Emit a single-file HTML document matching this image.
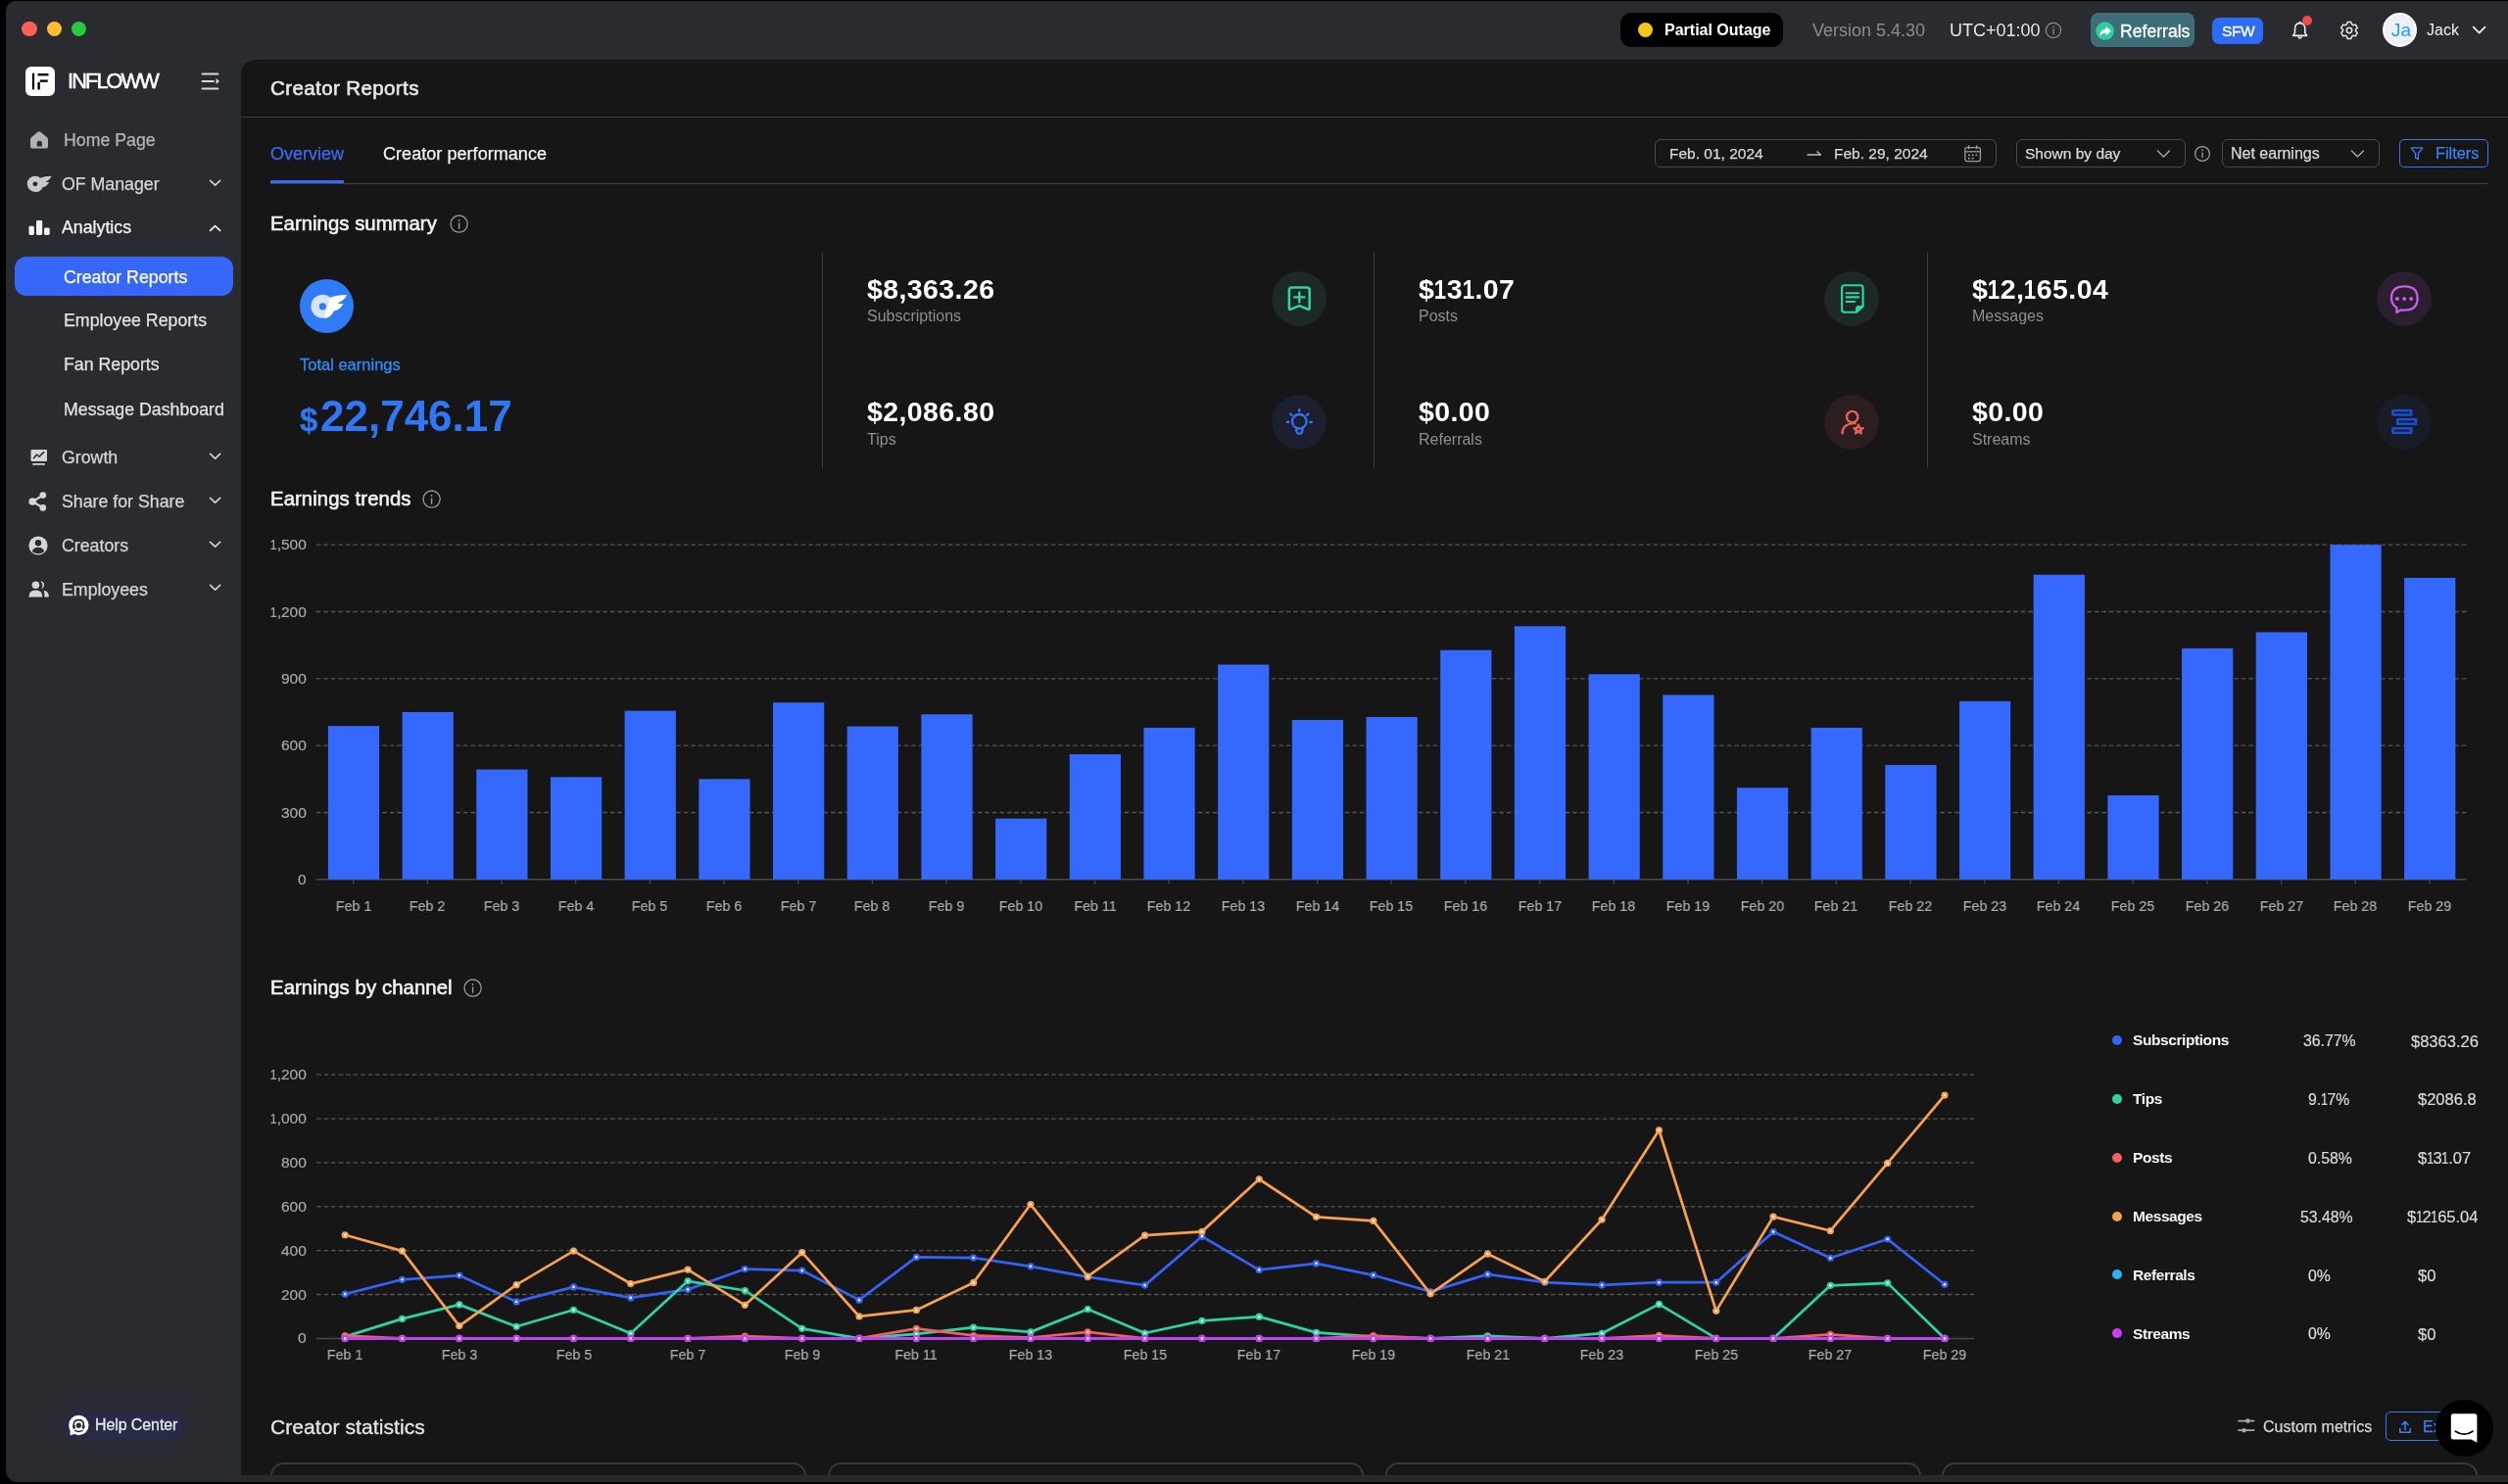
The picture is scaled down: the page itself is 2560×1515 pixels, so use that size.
<!DOCTYPE html>
<html><head><meta charset="utf-8"><title>Creator Reports</title>
<style>
html,body{margin:0;padding:0;background:#000;width:2560px;height:1515px;overflow:hidden}
body{position:relative;font-family:"Liberation Sans", sans-serif}
.t{position:absolute;line-height:1;white-space:nowrap;font-family:"Liberation Sans", sans-serif;will-change:transform}
svg{overflow:visible}
</style></head><body>
<div style="position:absolute;left:6.0px;top:1.0px;width:2554.0px;height:1512.0px;background:#2a2b30;border-radius:10px 0 0 12px"></div>
<div style="position:absolute;left:246.0px;top:60.5px;width:2314.0px;height:1445.3px;background:#161617;border-top-left-radius:15px"></div>
<div style="position:absolute;left:22.4px;top:21.8px;width:15.4px;height:15.4px;background:#fe5f57;border-radius:50%"></div>
<div style="position:absolute;left:47.5px;top:21.8px;width:15.4px;height:15.4px;background:#febc2e;border-radius:50%"></div>
<div style="position:absolute;left:72.6px;top:21.8px;width:15.4px;height:15.4px;background:#28c840;border-radius:50%"></div>
<div style="position:absolute;left:1654.0px;top:13.0px;width:166.0px;height:35.0px;background:#000;border-radius:11.5px"></div>
<div style="position:absolute;left:1672.1px;top:22.9px;width:15.4px;height:15.4px;background:#f5c518;border-radius:50%"></div>
<div class="t" style="left:1699.0px;top:22.80px;font-size:16px;color:#fff;font-weight:700;">Partial Outage</div>
<div class="t" style="left:1849.5px;top:21.70px;font-size:18px;color:#8b8b90;">Version 5.4.30</div>
<div class="t" style="left:1990.0px;top:21.70px;font-size:18px;color:#e6e6e6;">UTC+01:00</div>
<svg style="position:absolute;left:2087.0px;top:22.0px;" width="18" height="18" viewBox="0 0 18 18"><circle cx="9" cy="9" r="7.6" fill="none" stroke="#8e8e93" stroke-width="1.2"/><rect x="8.4" y="7.6" width="1.3" height="5.5" fill="#8e8e93"/><circle cx="9" cy="5.4" r="0.8" fill="#8e8e93"/></svg>
<div style="position:absolute;left:2134.0px;top:13.0px;width:106.0px;height:35.0px;background:#3d6e77;border-radius:8px"></div>
<svg style="position:absolute;left:2139.0px;top:22.0px;" width="20" height="20" viewBox="0 0 20 20"><circle cx="9.6" cy="9.6" r="9.3" fill="#2ecf9c"/><path d="M4.6 14.4 C5 10 7.6 8 11 8 V5.4 L15.6 9.6 L11 13.8 V11.2 C8.4 11.2 6.2 12.2 4.6 14.4 Z" fill="#fff" stroke="#fff" stroke-width="0.6" stroke-linejoin="round"/></svg>
<div class="t" style="left:2164.0px;top:23.64px;font-size:17.6px;color:#fff;-webkit-text-stroke:0.3px #fff;">Referrals</div>
<div style="position:absolute;left:2258.0px;top:17.5px;width:52.0px;height:27.5px;background:#2f6cf6;border-radius:7px"></div>
<div class="t" style="left:2268.0px;top:23.83px;font-size:15.5px;color:#fff;letter-spacing:-0.4px;-webkit-text-stroke:0.35px #fff;">SFW</div>
<svg style="position:absolute;left:2337.0px;top:19.0px;" width="22" height="24" viewBox="0 0 22 24"><path d="M10.65 4.6 C7.3 4.6 5.5 7.2 5.5 10.4 V14.6 L3.6 17.4 H17.7 L15.8 14.6 V10.4 C15.8 7.2 14 4.6 10.65 4.6 Z" fill="none" stroke="#ececec" stroke-width="1.6" stroke-linejoin="round"/><path d="M10.65 3.2 V4.6" stroke="#ececec" stroke-width="1.6" stroke-linecap="round"/><path d="M9 18.2 C9.2 19.5 9.8 20.1 10.65 20.1 C11.5 20.1 12.1 19.5 12.3 18.2" fill="none" stroke="#ececec" stroke-width="1.5"/></svg>
<div style="position:absolute;left:2350.0px;top:15.7px;width:10.2px;height:10.2px;background:#f04a4a;border-radius:50%"></div>
<svg style="position:absolute;left:2387.5px;top:20.7px;" width="20" height="20" viewBox="0 0 20 20"><path d="M7.32 3.97 L8.07 1.62 L11.93 1.62 L12.68 3.97 L13.88 4.66 L16.29 4.13 L18.22 7.49 L16.56 9.31 L16.56 10.69 L18.22 12.51 L16.29 15.87 L13.88 15.34 L12.68 16.03 L11.93 18.38 L8.07 18.38 L7.32 16.03 L6.12 15.34 L3.71 15.87 L1.78 12.51 L3.44 10.69 L3.44 9.31 L1.78 7.49 L3.71 4.13 L6.12 4.66 Z" fill="none" stroke="#e6e6e6" stroke-width="1.5" stroke-linejoin="round"/><circle cx="10" cy="10" r="2.7" fill="none" stroke="#e6e6e6" stroke-width="1.5"/></svg>
<div style="position:absolute;left:2432.0px;top:13.2px;width:35.0px;height:35.0px;background:#eef0f4;border-radius:50%;box-sizing:border-box;border:2px solid #fff"></div>
<div class="t" style="left:2440.5px;top:21.25px;font-size:19px;color:#1aa3f2;">Ja</div>
<div class="t" style="left:2477.0px;top:22.80px;font-size:16px;color:#f0f0f0;">Jack</div>
<svg style="position:absolute;left:2522.0px;top:25.0px;" width="17" height="12" viewBox="0 0 17 12"><path d="M2.7 2.6 L8.6 8.6 L14.5 2.6" fill="none" stroke="#e8e8e8" stroke-width="1.8" stroke-linecap="round" stroke-linejoin="round"/></svg>
<div style="position:absolute;left:26.3px;top:68.0px;width:30.0px;height:30.0px;background:#fff;border-radius:6px"></div>
<svg style="position:absolute;left:26.3px;top:68.0px;" width="30" height="30" viewBox="0 0 30 30"><g fill="#000"><rect x="6.9" y="6.7" width="2.2" height="16.7"/><rect x="12.6" y="7" width="10.9" height="2.4"/><rect x="14.8" y="13.5" width="7.9" height="2.3"/><path d="M12.4 23.4 V16.6 L13.2 15.8 H14.8 V23.4 Z"/></g></svg>
<div class="t" style="left:69.2px;top:72.16px;font-size:21.7px;color:#fff;letter-spacing:-1.85px;-webkit-text-stroke:0.55px #fff;">INFLOWW</div>
<svg style="position:absolute;left:204.0px;top:72.0px;" width="22" height="22" viewBox="0 0 22 22"><g stroke="#d8d8dc" stroke-width="1.8" stroke-linecap="round"><line x1="2.5" y1="3.5" x2="18.5" y2="3.5"/><line x1="2.5" y1="11" x2="14" y2="11"/><line x1="2.5" y1="18.5" x2="18.5" y2="18.5"/></g><path d="M16.5 8 L20 11 L16.5 14 Z" fill="#d8d8dc"/></svg>
<svg style="position:absolute;left:29.0px;top:132.0px;" width="22" height="22" viewBox="0 0 22 22"><path d="M2 10.2 Q2 9 3 8.2 L9.6 2.8 Q11 1.7 12.4 2.8 L19 8.2 Q20 9 20 10.2 V17.8 Q20 19.6 18.2 19.6 H3.8 Q2 19.6 2 17.8 Z" fill="#b2b2b6"/><path d="M8.7 17.5 V13.6 Q8.7 11.7 11.3 11.7 Q13.9 11.7 13.9 13.6 V17.5 Z" fill="#2a2b30"/></svg>
<div class="t" style="left:65.0px;top:134.81px;font-size:17.75px;color:#b4b4b8;-webkit-text-stroke:0.25px currentColor;">Home Page</div>
<svg style="position:absolute;left:19.67px;top:169.3px;overflow:visible" width="38" height="38" viewBox="0 0 56 56"><circle cx="23.4" cy="27.8" r="12" fill="#c8c8cd"/><circle cx="23.4" cy="27.8" r="3.6" fill="#2a2b30"/><path d="M31.2 18.8 Q38 15.8 48.2 16 Q45.6 21.8 38.4 24.4 Q41.6 25.2 44.6 25 Q40.8 31.8 34.8 32.6 Q31.6 39.8 24.8 40.2 Z" fill="#c8c8cd"/></svg>
<div class="t" style="left:62.7px;top:179.51px;font-size:17.75px;color:#d6d6da;-webkit-text-stroke:0.25px currentColor;">OF Manager</div>
<svg style="position:absolute;left:212.0px;top:181.6px;" width="16" height="10" viewBox="0 0 16 10"><path d="M2.6 2.4 L7.6 7.2 L12.6 2.4" fill="none" stroke="#d0d0d4" stroke-width="1.7" stroke-linecap="round" stroke-linejoin="round"/></svg>
<svg style="position:absolute;left:28.0px;top:224.0px;" width="24" height="18" viewBox="0 0 24 18"><rect x="1.5" y="6.8" width="5.4" height="9.2" rx="1.4" fill="#f2f2f4"/><rect x="9" y="1.1" width="6.2" height="14.9" rx="1.4" fill="#f2f2f4"/><rect x="17" y="8.6" width="5.7" height="7.4" rx="1.4" fill="#f2f2f4"/></svg>
<div class="t" style="left:62.7px;top:224.41px;font-size:17.75px;color:#f4f4f6;-webkit-text-stroke:0.25px currentColor;">Analytics</div>
<svg style="position:absolute;left:212.0px;top:228.0px;" width="16" height="10" viewBox="0 0 16 10"><path d="M2.6 7.4 L7.6 2.6 L12.6 7.4" fill="none" stroke="#f0f0f2" stroke-width="1.7" stroke-linecap="round" stroke-linejoin="round"/></svg>
<div style="position:absolute;left:15.2px;top:262.3px;width:222.8px;height:39.7px;background:#3767f8;border-radius:12px"></div>
<div class="t" style="left:65.0px;top:274.51px;font-size:17.75px;color:#fff;-webkit-text-stroke:0.25px currentColor;">Creator Reports</div>
<div class="t" style="left:65.0px;top:319.11px;font-size:17.75px;color:#e2e2e6;-webkit-text-stroke:0.25px currentColor;">Employee Reports</div>
<div class="t" style="left:65.0px;top:364.21px;font-size:17.75px;color:#e2e2e6;-webkit-text-stroke:0.25px currentColor;">Fan Reports</div>
<div class="t" style="left:65.0px;top:409.51px;font-size:17.75px;color:#e2e2e6;-webkit-text-stroke:0.25px currentColor;">Message Dashboard</div>
<svg style="position:absolute;left:29.0px;top:456.0px;" width="22" height="22" viewBox="0 0 22 22"><rect x="2.5" y="3" width="16.5" height="12" rx="1" fill="#d6d6da"/><path d="M5.6 11.6 L8.6 8 L11 10.2 L15.6 5.6" fill="none" stroke="#2a2b30" stroke-width="1.5" stroke-linecap="round" stroke-linejoin="round"/><rect x="4" y="17" width="13" height="1.8" rx="0.9" fill="#d6d6da"/></svg>
<div class="t" style="left:62.7px;top:459.41px;font-size:17.75px;color:#d6d6da;-webkit-text-stroke:0.25px currentColor;">Growth</div>
<svg style="position:absolute;left:28.0px;top:501.0px;" width="22" height="22" viewBox="0 0 22 22"><circle cx="5.2" cy="11" r="3.8" fill="#d6d6da"/><circle cx="15.8" cy="4.6" r="3.3" fill="#d6d6da"/><circle cx="15.8" cy="17.4" r="3.3" fill="#d6d6da"/><path d="M5.2 11 L15.8 4.6 M5.2 11 L15.8 17.4" stroke="#d6d6da" stroke-width="2.2"/></svg>
<div class="t" style="left:62.7px;top:504.11px;font-size:17.75px;color:#d6d6da;-webkit-text-stroke:0.25px currentColor;">Share for Share</div>
<svg style="position:absolute;left:28.0px;top:546.0px;" width="22" height="22" viewBox="0 0 22 22"><circle cx="11" cy="11" r="9.6" fill="#d6d6da"/><circle cx="11" cy="8.2" r="3.2" fill="#2a2b30"/><path d="M4.8 17 Q6.2 12.8 11 12.8 Q15.8 12.8 17.2 17 Q14.8 19.2 11 19.2 Q7.2 19.2 4.8 17 Z" fill="#2a2b30"/></svg>
<div class="t" style="left:62.7px;top:548.81px;font-size:17.75px;color:#d6d6da;-webkit-text-stroke:0.25px currentColor;">Creators</div>
<svg style="position:absolute;left:28.0px;top:591.0px;" width="24" height="22" viewBox="0 0 24 22"><circle cx="8.4" cy="6.2" r="3.8" fill="#d6d6da"/><path d="M1.4 18.6 Q1.4 11.6 8.4 11.6 Q15.4 11.6 15.4 18.6 Z" fill="#d6d6da"/><path d="M13.2 2.6 Q17.2 2.8 17 6.6 Q16.8 9.6 14.2 10 Q15.6 8.2 15.4 6.4 Q15.2 4 13.2 2.6 Z" fill="#d6d6da"/><path d="M16.8 11.8 Q21.8 12.4 21.8 18.6 H17.4 Q17.6 14.6 16.8 11.8 Z" fill="#d6d6da"/></svg>
<div class="t" style="left:62.7px;top:593.51px;font-size:17.75px;color:#d6d6da;-webkit-text-stroke:0.25px currentColor;">Employees</div>
<svg style="position:absolute;left:212.0px;top:461.0px;" width="16" height="10" viewBox="0 0 16 10"><path d="M2.6 2.4 L7.6 7.2 L12.6 2.4" fill="none" stroke="#d0d0d4" stroke-width="1.7" stroke-linecap="round" stroke-linejoin="round"/></svg>
<svg style="position:absolute;left:212.0px;top:505.7px;" width="16" height="10" viewBox="0 0 16 10"><path d="M2.6 2.4 L7.6 7.2 L12.6 2.4" fill="none" stroke="#d0d0d4" stroke-width="1.7" stroke-linecap="round" stroke-linejoin="round"/></svg>
<svg style="position:absolute;left:212.0px;top:550.5px;" width="16" height="10" viewBox="0 0 16 10"><path d="M2.6 2.4 L7.6 7.2 L12.6 2.4" fill="none" stroke="#d0d0d4" stroke-width="1.7" stroke-linecap="round" stroke-linejoin="round"/></svg>
<svg style="position:absolute;left:212.0px;top:595.2px;" width="16" height="10" viewBox="0 0 16 10"><path d="M2.6 2.4 L7.6 7.2 L12.6 2.4" fill="none" stroke="#d0d0d4" stroke-width="1.7" stroke-linecap="round" stroke-linejoin="round"/></svg>
<div style="position:absolute;left:63.2px;top:1440.0px;width:127.0px;height:29.6px;background:#262b43;border-radius:15px"></div>
<svg style="position:absolute;left:69.0px;top:1444.0px;" width="24" height="24" viewBox="0 0 24 24"><circle cx="11.3" cy="11" r="10.2" fill="#fff"/><path d="M2.6 16 L2.6 21.4 L8 19.6 Z" fill="#fff"/><path d="M6.2 12.4 V10.6 Q6.2 5.6 11.3 5.6 Q16.4 5.6 16.4 10.6 V12.4" fill="none" stroke="#262b43" stroke-width="1.6"/><rect x="5.2" y="10.8" width="2.6" height="4" rx="1" fill="#262b43"/><rect x="14.8" y="10.8" width="2.6" height="4" rx="1" fill="#262b43"/><circle cx="11.3" cy="11.2" r="2.6" fill="#262b43"/><path d="M7 16 Q11.3 19.2 15.6 16" fill="none" stroke="#262b43" stroke-width="1.5"/></svg>
<div class="t" style="left:97.0px;top:1447.00px;font-size:16px;color:#e8e8ec;letter-spacing:-0.1px;-webkit-text-stroke:0.3px #e8e8ec;">Help Center</div>
<div class="t" style="left:276.0px;top:80.38px;font-size:20.5px;color:#e6e6e6;letter-spacing:0.4px;-webkit-text-stroke:0.6px #e6e6e6;">Creator Reports</div>
<div style="position:absolute;left:246.0px;top:119.0px;width:2314.0px;height:1.0px;background:#3d3d3d"></div>
<div class="t" style="left:276.0px;top:147.70px;font-size:18px;color:#3a6cf6;-webkit-text-stroke:0.25px #3a6cf6;">Overview</div>
<div class="t" style="left:391.0px;top:147.70px;font-size:18px;color:#f2f2f2;letter-spacing:0.05px;-webkit-text-stroke:0.25px #f2f2f2;">Creator performance</div>
<div style="position:absolute;left:276.0px;top:187.0px;width:2264.0px;height:1.0px;background:#424242"></div>
<div style="position:absolute;left:276.0px;top:184.0px;width:75.0px;height:3.0px;background:#3467fa"></div>
<div style="position:absolute;left:1689.2px;top:142.0px;width:348.7px;height:29.0px;box-sizing:border-box;border:1.2px solid #4a4a4c;border-radius:6px"></div>
<div class="t" style="left:1704.0px;top:148.62px;font-size:15.5px;color:#d8d8d8;-webkit-text-stroke:0.25px #d8d8d8;">Feb. 01, 2024</div>
<svg style="position:absolute;left:1843.0px;top:151.0px;" width="18" height="12" viewBox="0 0 18 12"><path d="M1.5 7 H15.5 L11.5 3.5" fill="none" stroke="#bdbdbd" stroke-width="1.3" stroke-linejoin="round"/></svg>
<div class="t" style="left:1871.5px;top:148.62px;font-size:15.5px;color:#d8d8d8;-webkit-text-stroke:0.25px #d8d8d8;">Feb. 29, 2024</div>
<svg style="position:absolute;left:2004.0px;top:147.0px;" width="20" height="20" viewBox="0 0 20 20"><rect x="1.8" y="3.6" width="15.6" height="14" rx="2" fill="none" stroke="#9a9a9a" stroke-width="1.3"/><line x1="1.8" y1="7.8" x2="17.4" y2="7.8" stroke="#9a9a9a" stroke-width="1.3"/><line x1="5.6" y1="1.4" x2="5.6" y2="5.2" stroke="#9a9a9a" stroke-width="1.3"/><line x1="13.6" y1="1.4" x2="13.6" y2="5.2" stroke="#9a9a9a" stroke-width="1.3"/><g fill="#9a9a9a"><rect x="5" y="10.4" width="1.8" height="1.8"/><rect x="8.7" y="10.4" width="1.8" height="1.8"/><rect x="12.4" y="10.4" width="1.8" height="1.8"/><rect x="5" y="13.8" width="1.8" height="1.8"/><rect x="8.7" y="13.8" width="1.8" height="1.8"/></g></svg>
<div style="position:absolute;left:2057.6px;top:142.0px;width:173.2px;height:29.0px;box-sizing:border-box;border:1.2px solid #4a4a4c;border-radius:6px"></div>
<div class="t" style="left:2066.5px;top:148.62px;font-size:15.5px;color:#d8d8d8;-webkit-text-stroke:0.25px #d8d8d8;">Shown by day</div>
<svg style="position:absolute;left:2200.0px;top:151.0px;" width="17" height="12" viewBox="0 0 17 12"><path d="M2.4 3 L8.4 9 L14.4 3" fill="none" stroke="#a8a8a8" stroke-width="1.4" stroke-linecap="round" stroke-linejoin="round"/></svg>
<svg style="position:absolute;left:2239.0px;top:148.0px;" width="18" height="18" viewBox="0 0 18 18"><circle cx="9" cy="9" r="7.4" fill="none" stroke="#a0a0a4" stroke-width="1.2"/><rect x="8.4" y="7.6" width="1.3" height="5.4" fill="#a0a0a4"/><circle cx="9" cy="5.4" r="0.8" fill="#a0a0a4"/></svg>
<div style="position:absolute;left:2268.0px;top:142.0px;width:161.4px;height:29.0px;box-sizing:border-box;border:1.2px solid #4a4a4c;border-radius:6px"></div>
<div class="t" style="left:2277.0px;top:148.80px;font-size:16px;color:#d8d8d8;-webkit-text-stroke:0.25px #d8d8d8;">Net earnings</div>
<svg style="position:absolute;left:2398.0px;top:151.0px;" width="17" height="12" viewBox="0 0 17 12"><path d="M2.4 3 L8.4 9 L14.4 3" fill="none" stroke="#a8a8a8" stroke-width="1.4" stroke-linecap="round" stroke-linejoin="round"/></svg>
<div style="position:absolute;left:2448.5px;top:142.0px;width:91.2px;height:29.0px;box-sizing:border-box;border:1.5px solid #3478f6;border-radius:5px"></div>
<svg style="position:absolute;left:2459.0px;top:149.0px;" width="16" height="16" viewBox="0 0 16 16"><path d="M2.6 1.8 H13.4 Q13.8 1.8 13.6 2.3 L9.4 7.6 V13.6 L6.6 12.2 V7.6 L2.4 2.3 Q2.2 1.8 2.6 1.8 Z" fill="none" stroke="#3a80f6" stroke-width="1.35" stroke-linejoin="round"/></svg>
<div class="t" style="left:2485.5px;top:147.95px;font-size:16.3px;color:#3a80f6;-webkit-text-stroke:0.25px #3a80f6;">Filters</div>
<div class="t" style="left:276.0px;top:217.94px;font-size:20.3px;color:#f2f2f2;letter-spacing:0.05px;-webkit-text-stroke:0.6px #f2f2f2;">Earnings summary</div>
<svg style="position:absolute;left:457.8px;top:218.1px;" width="21.2" height="21.2" viewBox="0 0 21.2 21.2"><circle cx="10.6" cy="10.6" r="8.6" fill="none" stroke="#9a9a9e" stroke-width="1.3"/><rect x="9.9" y="9.4" width="1.4" height="6.45" fill="#9a9a9e"/><circle cx="10.6" cy="6.99" r="0.9" fill="#9a9a9e"/></svg>
<svg style="position:absolute;left:306.2px;top:284.7px;" width="56" height="56" viewBox="0 0 56 56"><circle cx="27.5" cy="27.5" r="27.5" fill="#2f7bf8"/><circle cx="23.4" cy="27.8" r="12" fill="#d9e3ff"/><circle cx="23.4" cy="27.8" r="3.6" fill="#2f7bf8"/><path d="M31.2 18.8 Q38 15.8 48.2 16 Q45.6 21.8 38.4 24.4 Q41.6 25.2 44.6 25 Q40.8 31.8 34.8 32.6 Q31.6 39.8 24.8 40.2 Z" fill="#fff"/></svg>
<div class="t" style="left:305.9px;top:363.98px;font-size:16.5px;color:#2f8cf8;-webkit-text-stroke:0.3px #2f8cf8;">Total earnings</div>
<div class="t" style="left:305.5px;top:412.45px;font-size:33px;color:#3077f8;font-weight:700;-webkit-text-stroke:0.3px #3077f8;">$</div>
<div class="t" style="left:326.5px;top:403.10px;font-size:44px;color:#3077f8;font-weight:700;">22,746.17</div>
<div style="position:absolute;left:839.0px;top:258.0px;width:1.0px;height:220.0px;background:#3d3d3d"></div>
<div style="position:absolute;left:1402.0px;top:258.0px;width:1.0px;height:220.0px;background:#3d3d3d"></div>
<div style="position:absolute;left:1967.0px;top:258.0px;width:1.0px;height:220.0px;background:#3d3d3d"></div>
<div class="t" style="left:884.5px;top:280.57px;font-size:28.5px;color:#ffffff;font-weight:700;letter-spacing:0.4px;">$8,363.26</div>
<div class="t" style="left:884.5px;top:315.40px;font-size:16px;color:#8e8e93;">Subscriptions</div>
<div class="t" style="left:884.5px;top:406.17px;font-size:28.5px;color:#ffffff;font-weight:700;letter-spacing:0.4px;">$2,086.80</div>
<div class="t" style="left:884.5px;top:440.90px;font-size:16px;color:#8e8e93;">Tips</div>
<div class="t" style="left:1448.0px;top:280.57px;font-size:28.5px;color:#ffffff;font-weight:700;letter-spacing:0.4px;">$<span style="display:inline-block;transform:scaleX(0.78);margin:0 -1.9px">1</span>3<span style="display:inline-block;transform:scaleX(0.78);margin:0 -1.9px">1</span>.07</div>
<div class="t" style="left:1448.0px;top:315.40px;font-size:16px;color:#8e8e93;">Posts</div>
<div class="t" style="left:1448.0px;top:406.17px;font-size:28.5px;color:#ffffff;font-weight:700;letter-spacing:0.4px;">$0.00</div>
<div class="t" style="left:1448.0px;top:440.90px;font-size:16px;color:#8e8e93;">Referrals</div>
<div class="t" style="left:2012.5px;top:280.57px;font-size:28.5px;color:#ffffff;font-weight:700;letter-spacing:0.4px;">$<span style="display:inline-block;transform:scaleX(0.78);margin:0 -1.9px">1</span>2,<span style="display:inline-block;transform:scaleX(0.78);margin:0 -1.9px">1</span>65.04</div>
<div class="t" style="left:2012.5px;top:315.40px;font-size:16px;color:#8e8e93;">Messages</div>
<div class="t" style="left:2012.5px;top:406.17px;font-size:28.5px;color:#ffffff;font-weight:700;letter-spacing:0.4px;">$0.00</div>
<div class="t" style="left:2012.5px;top:440.90px;font-size:16px;color:#8e8e93;">Streams</div>
<svg style="position:absolute;left:1298.0px;top:277.0px;" width="56" height="56" viewBox="0 0 56 56"><circle cx="28" cy="28" r="27.8" fill="#1e2927"/><path d="M17.9 19 Q17.9 16.4 20.5 16.4 H36.1 Q38.7 16.4 38.7 19 V37.4 Q38.7 39.5 36.8 38.7 L28.3 35.2 L19.8 38.7 Q17.9 39.5 17.9 37.4 Z" fill="none" stroke="#2dd6a8" stroke-width="2.5" stroke-linejoin="round"/><path d="M28.3 21.4 V31.4 M23.2 26.4 H33.4" stroke="#2dd6a8" stroke-width="2.4" stroke-linecap="round"/></svg>
<svg style="position:absolute;left:1298.0px;top:403.0px;" width="56" height="56" viewBox="0 0 56 56"><circle cx="28" cy="28" r="27.8" fill="#1b1f2e"/><g fill="none" stroke="#3a6ff8" stroke-width="2.3" stroke-linecap="round"><circle cx="28.3" cy="27.3" r="7.3"/><path d="M25.2 33.4 V35.8 Q25.2 39.8 28.3 39.8 Q31.4 39.8 31.4 35.8 V33.4"/></g><g stroke="#3a6ff8" stroke-width="2.5" stroke-linecap="round"><path d="M28.3 15.2 V16.8 M19.2 19.6 L20.4 20.6 M37.4 19.6 L36.2 20.6 M15.9 27.7 H17.3 M39.3 27.9 H40.7"/></g></svg>
<svg style="position:absolute;left:1862.0px;top:277.0px;" width="56" height="56" viewBox="0 0 56 56"><circle cx="28" cy="28" r="27.8" fill="#1e2927"/><path d="M20.6 14.2 H37.1 Q39.6 14.2 39.6 16.7 V35.8 L32.8 41.7 H20.6 Q18.1 41.7 18.1 39.2 V16.7 Q18.1 14.2 20.6 14.2 Z" fill="none" stroke="#2dd6a8" stroke-width="2.1" stroke-linejoin="round"/><path d="M32.8 41.7 V38.4 Q32.8 35.8 35.4 35.8 H39.6 Z" fill="#2dd6a8" stroke="#2dd6a8" stroke-width="1.6" stroke-linejoin="round"/><path d="M22.6 22.3 H35.1 M22.6 26.4 H35.1 M22.6 31 H31.3" stroke="#2dd6a8" stroke-width="2.1" stroke-linecap="round"/></svg>
<svg style="position:absolute;left:1862.0px;top:403.0px;" width="56" height="56" viewBox="0 0 56 56"><circle cx="28" cy="28" r="27.8" fill="#2c1e1f"/><g fill="none" stroke="#ea5e5c" stroke-width="2.4" stroke-linecap="round"><circle cx="28.7" cy="22.6" r="5.7"/><path d="M31.6 29.2 C24.4 28.8 18.6 32.6 18.6 39.2"/></g><path d="M34.9 30.4 L36.5 33.6 L39.8 34 L37.4 36.3 L38 39.6 L34.9 38 L31.8 39.6 L32.4 36.3 L30 34 L33.3 33.6 Z" fill="#ea5e5c" stroke="#ea5e5c" stroke-width="1.8" stroke-linejoin="round"/><circle cx="34.9" cy="35.2" r="1" fill="#2c1e1f"/></svg>
<svg style="position:absolute;left:2426.0px;top:277.0px;" width="56" height="56" viewBox="0 0 56 56"><circle cx="28" cy="28" r="27.8" fill="#291f2f"/><path d="M20.4 37.2 Q15 33.6 15 27.5 Q15 15.4 28.3 15.4 Q41.6 15.4 41.6 27.5 Q41.6 39.6 28.3 39.6 Q26.4 39.6 24.8 39.3 L20.3 42 Z" fill="none" stroke="#c85cf2" stroke-width="2.3" stroke-linejoin="round"/><circle cx="20.9" cy="27.9" r="2" fill="#c85cf2"/><circle cx="28.1" cy="27.9" r="2" fill="#c85cf2"/><circle cx="35.1" cy="27.9" r="2" fill="#c85cf2"/></svg>
<svg style="position:absolute;left:2426.0px;top:403.0px;" width="56" height="56" viewBox="0 0 56 56"><circle cx="28" cy="28" r="27.8" fill="#181c27"/><g fill="none" stroke="#1a50d8" stroke-width="2.45"><rect x="16.5" y="16.1" width="18.7" height="4.4"/><rect x="21.2" y="25.2" width="18.7" height="4.5"/><rect x="16.5" y="34.4" width="18.7" height="4.4"/></g></svg>
<div class="t" style="left:276.0px;top:499.45px;font-size:20.3px;color:#f2f2f2;letter-spacing:0.1px;-webkit-text-stroke:0.6px #f2f2f2;">Earnings trends</div>
<svg style="position:absolute;left:430.4px;top:499.1px;" width="21.2" height="21.2" viewBox="0 0 21.2 21.2"><circle cx="10.6" cy="10.6" r="8.6" fill="none" stroke="#9a9a9e" stroke-width="1.3"/><rect x="9.9" y="9.4" width="1.4" height="6.45" fill="#9a9a9e"/><circle cx="10.6" cy="6.99" r="0.9" fill="#9a9a9e"/></svg>
<svg style="position:absolute;left:0.0px;top:0.0px;pointer-events:none" width="2560" height="1515" viewBox="0 0 2560 1515"><line x1="322.8" y1="897.8" x2="2517.7" y2="897.8" stroke="#4a4a4c" stroke-width="1.5"/><line x1="322.8" y1="829.5" x2="2517.7" y2="829.5" stroke="#555557" stroke-width="1.3" stroke-dasharray="4.6 2.9"/><line x1="322.8" y1="761.2" x2="2517.7" y2="761.2" stroke="#555557" stroke-width="1.3" stroke-dasharray="4.6 2.9"/><line x1="322.8" y1="692.8" x2="2517.7" y2="692.8" stroke="#555557" stroke-width="1.3" stroke-dasharray="4.6 2.9"/><line x1="322.8" y1="624.5" x2="2517.7" y2="624.5" stroke="#555557" stroke-width="1.3" stroke-dasharray="4.6 2.9"/><line x1="322.8" y1="556.2" x2="2517.7" y2="556.2" stroke="#555557" stroke-width="1.3" stroke-dasharray="4.6 2.9"/><rect x="334.91" y="741.12" width="52.22" height="156.68" fill="#3468fe"/><line x1="360.6" y1="897.8" x2="360.6" y2="902.8" stroke="#4a4a4c" stroke-width="1.2"/><rect x="410.60" y="727.00" width="52.22" height="170.80" fill="#3468fe"/><line x1="436.3" y1="897.8" x2="436.3" y2="902.8" stroke="#4a4a4c" stroke-width="1.2"/><rect x="486.28" y="785.53" width="52.22" height="112.27" fill="#3468fe"/><line x1="512.0" y1="897.8" x2="512.0" y2="902.8" stroke="#4a4a4c" stroke-width="1.2"/><rect x="561.97" y="793.27" width="52.22" height="104.53" fill="#3468fe"/><line x1="587.7" y1="897.8" x2="587.7" y2="902.8" stroke="#4a4a4c" stroke-width="1.2"/><rect x="637.65" y="725.63" width="52.22" height="172.17" fill="#3468fe"/><line x1="663.4" y1="897.8" x2="663.4" y2="902.8" stroke="#4a4a4c" stroke-width="1.2"/><rect x="713.34" y="795.32" width="52.22" height="102.48" fill="#3468fe"/><line x1="739.1" y1="897.8" x2="739.1" y2="902.8" stroke="#4a4a4c" stroke-width="1.2"/><rect x="789.03" y="717.21" width="52.22" height="180.59" fill="#3468fe"/><line x1="814.8" y1="897.8" x2="814.8" y2="902.8" stroke="#4a4a4c" stroke-width="1.2"/><rect x="864.71" y="741.57" width="52.22" height="156.23" fill="#3468fe"/><line x1="890.4" y1="897.8" x2="890.4" y2="902.8" stroke="#4a4a4c" stroke-width="1.2"/><rect x="940.40" y="729.28" width="52.22" height="168.52" fill="#3468fe"/><line x1="966.1" y1="897.8" x2="966.1" y2="902.8" stroke="#4a4a4c" stroke-width="1.2"/><rect x="1016.09" y="835.63" width="52.22" height="62.17" fill="#3468fe"/><line x1="1041.8" y1="897.8" x2="1041.8" y2="902.8" stroke="#4a4a4c" stroke-width="1.2"/><rect x="1091.77" y="770.04" width="52.22" height="127.76" fill="#3468fe"/><line x1="1117.5" y1="897.8" x2="1117.5" y2="902.8" stroke="#4a4a4c" stroke-width="1.2"/><rect x="1167.46" y="742.94" width="52.22" height="154.86" fill="#3468fe"/><line x1="1193.2" y1="897.8" x2="1193.2" y2="902.8" stroke="#4a4a4c" stroke-width="1.2"/><rect x="1243.14" y="678.49" width="52.22" height="219.31" fill="#3468fe"/><line x1="1268.9" y1="897.8" x2="1268.9" y2="902.8" stroke="#4a4a4c" stroke-width="1.2"/><rect x="1318.83" y="734.97" width="52.22" height="162.83" fill="#3468fe"/><line x1="1344.6" y1="897.8" x2="1344.6" y2="902.8" stroke="#4a4a4c" stroke-width="1.2"/><rect x="1394.52" y="732.01" width="52.22" height="165.79" fill="#3468fe"/><line x1="1420.2" y1="897.8" x2="1420.2" y2="902.8" stroke="#4a4a4c" stroke-width="1.2"/><rect x="1470.20" y="663.69" width="52.22" height="234.11" fill="#3468fe"/><line x1="1495.9" y1="897.8" x2="1495.9" y2="902.8" stroke="#4a4a4c" stroke-width="1.2"/><rect x="1545.89" y="639.32" width="52.22" height="258.48" fill="#3468fe"/><line x1="1571.6" y1="897.8" x2="1571.6" y2="902.8" stroke="#4a4a4c" stroke-width="1.2"/><rect x="1621.58" y="688.29" width="52.22" height="209.51" fill="#3468fe"/><line x1="1647.3" y1="897.8" x2="1647.3" y2="902.8" stroke="#4a4a4c" stroke-width="1.2"/><rect x="1697.26" y="709.46" width="52.22" height="188.34" fill="#3468fe"/><line x1="1723.0" y1="897.8" x2="1723.0" y2="902.8" stroke="#4a4a4c" stroke-width="1.2"/><rect x="1772.95" y="804.20" width="52.22" height="93.60" fill="#3468fe"/><line x1="1798.7" y1="897.8" x2="1798.7" y2="902.8" stroke="#4a4a4c" stroke-width="1.2"/><rect x="1848.63" y="742.94" width="52.22" height="154.86" fill="#3468fe"/><line x1="1874.4" y1="897.8" x2="1874.4" y2="902.8" stroke="#4a4a4c" stroke-width="1.2"/><rect x="1924.32" y="780.97" width="52.22" height="116.83" fill="#3468fe"/><line x1="1950.1" y1="897.8" x2="1950.1" y2="902.8" stroke="#4a4a4c" stroke-width="1.2"/><rect x="2000.01" y="715.84" width="52.22" height="181.96" fill="#3468fe"/><line x1="2025.7" y1="897.8" x2="2025.7" y2="902.8" stroke="#4a4a4c" stroke-width="1.2"/><rect x="2075.69" y="586.72" width="52.22" height="311.08" fill="#3468fe"/><line x1="2101.4" y1="897.8" x2="2101.4" y2="902.8" stroke="#4a4a4c" stroke-width="1.2"/><rect x="2151.38" y="811.94" width="52.22" height="85.86" fill="#3468fe"/><line x1="2177.1" y1="897.8" x2="2177.1" y2="902.8" stroke="#4a4a4c" stroke-width="1.2"/><rect x="2227.06" y="661.87" width="52.22" height="235.93" fill="#3468fe"/><line x1="2252.8" y1="897.8" x2="2252.8" y2="902.8" stroke="#4a4a4c" stroke-width="1.2"/><rect x="2302.75" y="645.47" width="52.22" height="252.33" fill="#3468fe"/><line x1="2328.5" y1="897.8" x2="2328.5" y2="902.8" stroke="#4a4a4c" stroke-width="1.2"/><rect x="2378.44" y="556.20" width="52.22" height="341.60" fill="#3468fe"/><line x1="2404.2" y1="897.8" x2="2404.2" y2="902.8" stroke="#4a4a4c" stroke-width="1.2"/><rect x="2454.12" y="589.90" width="52.22" height="307.90" fill="#3468fe"/><line x1="2479.9" y1="897.8" x2="2479.9" y2="902.8" stroke="#4a4a4c" stroke-width="1.2"/></svg>
<div class="t" style="right:2247.0px;top:889.83px;font-size:15.5px;color:#a8a8ac;font-weight:400;-webkit-text-stroke:0.2px #a8a8ac">0</div>
<div class="t" style="right:2247.0px;top:821.51px;font-size:15.5px;color:#a8a8ac;font-weight:400;-webkit-text-stroke:0.2px #a8a8ac">300</div>
<div class="t" style="right:2247.0px;top:753.19px;font-size:15.5px;color:#a8a8ac;font-weight:400;-webkit-text-stroke:0.2px #a8a8ac">600</div>
<div class="t" style="right:2247.0px;top:684.87px;font-size:15.5px;color:#a8a8ac;font-weight:400;-webkit-text-stroke:0.2px #a8a8ac">900</div>
<div class="t" style="right:2247.0px;top:616.55px;font-size:15.5px;color:#a8a8ac;font-weight:400;-webkit-text-stroke:0.2px #a8a8ac"><span style="display:inline-block;transform:scaleX(0.8);margin:0 -1px">1</span>,200</div>
<div class="t" style="right:2247.0px;top:548.23px;font-size:15.5px;color:#a8a8ac;font-weight:400;-webkit-text-stroke:0.2px #a8a8ac"><span style="display:inline-block;transform:scaleX(0.8);margin:0 -1px">1</span>,500</div>
<div class="t" style="left:210.6px;width:300px;text-align:center;top:917.12px;font-size:15.5px;color:#acacb0;font-weight:400;-webkit-text-stroke:0.2px #acacb0;transform:scaleX(0.92);">Feb 1</div>
<div class="t" style="left:286.3px;width:300px;text-align:center;top:917.12px;font-size:15.5px;color:#acacb0;font-weight:400;-webkit-text-stroke:0.2px #acacb0;transform:scaleX(0.92);">Feb 2</div>
<div class="t" style="left:362.0px;width:300px;text-align:center;top:917.12px;font-size:15.5px;color:#acacb0;font-weight:400;-webkit-text-stroke:0.2px #acacb0;transform:scaleX(0.92);">Feb 3</div>
<div class="t" style="left:437.7px;width:300px;text-align:center;top:917.12px;font-size:15.5px;color:#acacb0;font-weight:400;-webkit-text-stroke:0.2px #acacb0;transform:scaleX(0.92);">Feb 4</div>
<div class="t" style="left:513.4px;width:300px;text-align:center;top:917.12px;font-size:15.5px;color:#acacb0;font-weight:400;-webkit-text-stroke:0.2px #acacb0;transform:scaleX(0.92);">Feb 5</div>
<div class="t" style="left:589.1px;width:300px;text-align:center;top:917.12px;font-size:15.5px;color:#acacb0;font-weight:400;-webkit-text-stroke:0.2px #acacb0;transform:scaleX(0.92);">Feb 6</div>
<div class="t" style="left:664.8px;width:300px;text-align:center;top:917.12px;font-size:15.5px;color:#acacb0;font-weight:400;-webkit-text-stroke:0.2px #acacb0;transform:scaleX(0.92);">Feb 7</div>
<div class="t" style="left:740.4px;width:300px;text-align:center;top:917.12px;font-size:15.5px;color:#acacb0;font-weight:400;-webkit-text-stroke:0.2px #acacb0;transform:scaleX(0.92);">Feb 8</div>
<div class="t" style="left:816.1px;width:300px;text-align:center;top:917.12px;font-size:15.5px;color:#acacb0;font-weight:400;-webkit-text-stroke:0.2px #acacb0;transform:scaleX(0.92);">Feb 9</div>
<div class="t" style="left:891.8px;width:300px;text-align:center;top:917.12px;font-size:15.5px;color:#acacb0;font-weight:400;-webkit-text-stroke:0.2px #acacb0;transform:scaleX(0.92);">Feb 10</div>
<div class="t" style="left:967.5px;width:300px;text-align:center;top:917.12px;font-size:15.5px;color:#acacb0;font-weight:400;-webkit-text-stroke:0.2px #acacb0;transform:scaleX(0.92);">Feb 11</div>
<div class="t" style="left:1043.2px;width:300px;text-align:center;top:917.12px;font-size:15.5px;color:#acacb0;font-weight:400;-webkit-text-stroke:0.2px #acacb0;transform:scaleX(0.92);">Feb 12</div>
<div class="t" style="left:1118.9px;width:300px;text-align:center;top:917.12px;font-size:15.5px;color:#acacb0;font-weight:400;-webkit-text-stroke:0.2px #acacb0;transform:scaleX(0.92);">Feb 13</div>
<div class="t" style="left:1194.6px;width:300px;text-align:center;top:917.12px;font-size:15.5px;color:#acacb0;font-weight:400;-webkit-text-stroke:0.2px #acacb0;transform:scaleX(0.92);">Feb 14</div>
<div class="t" style="left:1270.2px;width:300px;text-align:center;top:917.12px;font-size:15.5px;color:#acacb0;font-weight:400;-webkit-text-stroke:0.2px #acacb0;transform:scaleX(0.92);">Feb 15</div>
<div class="t" style="left:1345.9px;width:300px;text-align:center;top:917.12px;font-size:15.5px;color:#acacb0;font-weight:400;-webkit-text-stroke:0.2px #acacb0;transform:scaleX(0.92);">Feb 16</div>
<div class="t" style="left:1421.6px;width:300px;text-align:center;top:917.12px;font-size:15.5px;color:#acacb0;font-weight:400;-webkit-text-stroke:0.2px #acacb0;transform:scaleX(0.92);">Feb 17</div>
<div class="t" style="left:1497.3px;width:300px;text-align:center;top:917.12px;font-size:15.5px;color:#acacb0;font-weight:400;-webkit-text-stroke:0.2px #acacb0;transform:scaleX(0.92);">Feb 18</div>
<div class="t" style="left:1573.0px;width:300px;text-align:center;top:917.12px;font-size:15.5px;color:#acacb0;font-weight:400;-webkit-text-stroke:0.2px #acacb0;transform:scaleX(0.92);">Feb 19</div>
<div class="t" style="left:1648.7px;width:300px;text-align:center;top:917.12px;font-size:15.5px;color:#acacb0;font-weight:400;-webkit-text-stroke:0.2px #acacb0;transform:scaleX(0.92);">Feb 20</div>
<div class="t" style="left:1724.4px;width:300px;text-align:center;top:917.12px;font-size:15.5px;color:#acacb0;font-weight:400;-webkit-text-stroke:0.2px #acacb0;transform:scaleX(0.92);">Feb 21</div>
<div class="t" style="left:1800.1px;width:300px;text-align:center;top:917.12px;font-size:15.5px;color:#acacb0;font-weight:400;-webkit-text-stroke:0.2px #acacb0;transform:scaleX(0.92);">Feb 22</div>
<div class="t" style="left:1875.7px;width:300px;text-align:center;top:917.12px;font-size:15.5px;color:#acacb0;font-weight:400;-webkit-text-stroke:0.2px #acacb0;transform:scaleX(0.92);">Feb 23</div>
<div class="t" style="left:1951.4px;width:300px;text-align:center;top:917.12px;font-size:15.5px;color:#acacb0;font-weight:400;-webkit-text-stroke:0.2px #acacb0;transform:scaleX(0.92);">Feb 24</div>
<div class="t" style="left:2027.1px;width:300px;text-align:center;top:917.12px;font-size:15.5px;color:#acacb0;font-weight:400;-webkit-text-stroke:0.2px #acacb0;transform:scaleX(0.92);">Feb 25</div>
<div class="t" style="left:2102.8px;width:300px;text-align:center;top:917.12px;font-size:15.5px;color:#acacb0;font-weight:400;-webkit-text-stroke:0.2px #acacb0;transform:scaleX(0.92);">Feb 26</div>
<div class="t" style="left:2178.5px;width:300px;text-align:center;top:917.12px;font-size:15.5px;color:#acacb0;font-weight:400;-webkit-text-stroke:0.2px #acacb0;transform:scaleX(0.92);">Feb 27</div>
<div class="t" style="left:2254.2px;width:300px;text-align:center;top:917.12px;font-size:15.5px;color:#acacb0;font-weight:400;-webkit-text-stroke:0.2px #acacb0;transform:scaleX(0.92);">Feb 28</div>
<div class="t" style="left:2329.9px;width:300px;text-align:center;top:917.12px;font-size:15.5px;color:#acacb0;font-weight:400;-webkit-text-stroke:0.2px #acacb0;transform:scaleX(0.92);">Feb 29</div>
<div class="t" style="left:276.0px;top:998.14px;font-size:20.3px;color:#f2f2f2;letter-spacing:0.1px;-webkit-text-stroke:0.6px #f2f2f2;">Earnings by channel</div>
<svg style="position:absolute;left:472.2px;top:997.7px;" width="21.2" height="21.2" viewBox="0 0 21.2 21.2"><circle cx="10.6" cy="10.6" r="8.6" fill="none" stroke="#9a9a9e" stroke-width="1.3"/><rect x="9.9" y="9.4" width="1.4" height="6.45" fill="#9a9a9e"/><circle cx="10.6" cy="6.99" r="0.9" fill="#9a9a9e"/></svg>
<svg style="position:absolute;left:0.0px;top:0.0px;pointer-events:none" width="2560" height="1515" viewBox="0 0 2560 1515"><line x1="323.1" y1="1366.4" x2="2015.0" y2="1366.4" stroke="#4a4a4c" stroke-width="1.5"/><line x1="323.1" y1="1321.5" x2="2015.0" y2="1321.5" stroke="#555557" stroke-width="1.3" stroke-dasharray="4.6 2.9"/><line x1="323.1" y1="1276.7" x2="2015.0" y2="1276.7" stroke="#555557" stroke-width="1.3" stroke-dasharray="4.6 2.9"/><line x1="323.1" y1="1231.8" x2="2015.0" y2="1231.8" stroke="#555557" stroke-width="1.3" stroke-dasharray="4.6 2.9"/><line x1="323.1" y1="1186.9" x2="2015.0" y2="1186.9" stroke="#555557" stroke-width="1.3" stroke-dasharray="4.6 2.9"/><line x1="323.1" y1="1142.1" x2="2015.0" y2="1142.1" stroke="#555557" stroke-width="1.3" stroke-dasharray="4.6 2.9"/><line x1="323.1" y1="1097.2" x2="2015.0" y2="1097.2" stroke="#555557" stroke-width="1.3" stroke-dasharray="4.6 2.9"/><line x1="352.2" y1="1366.4" x2="352.2" y2="1370.4" stroke="#4a4a4c" stroke-width="1.2"/><line x1="468.8" y1="1366.4" x2="468.8" y2="1370.4" stroke="#4a4a4c" stroke-width="1.2"/><line x1="585.5" y1="1366.4" x2="585.5" y2="1370.4" stroke="#4a4a4c" stroke-width="1.2"/><line x1="702.1" y1="1366.4" x2="702.1" y2="1370.4" stroke="#4a4a4c" stroke-width="1.2"/><line x1="818.7" y1="1366.4" x2="818.7" y2="1370.4" stroke="#4a4a4c" stroke-width="1.2"/><line x1="935.3" y1="1366.4" x2="935.3" y2="1370.4" stroke="#4a4a4c" stroke-width="1.2"/><line x1="1052.0" y1="1366.4" x2="1052.0" y2="1370.4" stroke="#4a4a4c" stroke-width="1.2"/><line x1="1168.6" y1="1366.4" x2="1168.6" y2="1370.4" stroke="#4a4a4c" stroke-width="1.2"/><line x1="1285.2" y1="1366.4" x2="1285.2" y2="1370.4" stroke="#4a4a4c" stroke-width="1.2"/><line x1="1401.9" y1="1366.4" x2="1401.9" y2="1370.4" stroke="#4a4a4c" stroke-width="1.2"/><line x1="1518.5" y1="1366.4" x2="1518.5" y2="1370.4" stroke="#4a4a4c" stroke-width="1.2"/><line x1="1635.1" y1="1366.4" x2="1635.1" y2="1370.4" stroke="#4a4a4c" stroke-width="1.2"/><line x1="1751.7" y1="1366.4" x2="1751.7" y2="1370.4" stroke="#4a4a4c" stroke-width="1.2"/><line x1="1868.4" y1="1366.4" x2="1868.4" y2="1370.4" stroke="#4a4a4c" stroke-width="1.2"/><line x1="1985.0" y1="1366.4" x2="1985.0" y2="1370.4" stroke="#4a4a4c" stroke-width="1.2"/><polyline points="352.20,1321.08 410.51,1306.28 468.83,1302.02 527.14,1328.94 585.46,1313.91 643.77,1324.90 702.09,1316.37 760.40,1295.51 818.71,1297.08 877.03,1327.14 935.34,1283.40 993.66,1284.07 1051.97,1292.82 1110.29,1303.59 1168.60,1312.11 1226.91,1262.31 1285.23,1296.41 1343.54,1289.90 1401.86,1301.79 1460.17,1318.62 1518.49,1300.89 1576.80,1309.20 1635.11,1311.89 1693.43,1309.20 1751.74,1309.20 1810.06,1257.60 1868.37,1284.29 1926.69,1265.00 1985.00,1311.21" fill="none" stroke="#3462f6" stroke-width="2.75" stroke-linejoin="round"/><circle cx="352.20" cy="1321.08" r="3.6" fill="#3462f6"/><circle cx="352.20" cy="1321.08" r="1.3" fill="#fff"/><circle cx="410.51" cy="1306.28" r="3.6" fill="#3462f6"/><circle cx="410.51" cy="1306.28" r="1.3" fill="#fff"/><circle cx="468.83" cy="1302.02" r="3.6" fill="#3462f6"/><circle cx="468.83" cy="1302.02" r="1.3" fill="#fff"/><circle cx="527.14" cy="1328.94" r="3.6" fill="#3462f6"/><circle cx="527.14" cy="1328.94" r="1.3" fill="#fff"/><circle cx="585.46" cy="1313.91" r="3.6" fill="#3462f6"/><circle cx="585.46" cy="1313.91" r="1.3" fill="#fff"/><circle cx="643.77" cy="1324.90" r="3.6" fill="#3462f6"/><circle cx="643.77" cy="1324.90" r="1.3" fill="#fff"/><circle cx="702.09" cy="1316.37" r="3.6" fill="#3462f6"/><circle cx="702.09" cy="1316.37" r="1.3" fill="#fff"/><circle cx="760.40" cy="1295.51" r="3.6" fill="#3462f6"/><circle cx="760.40" cy="1295.51" r="1.3" fill="#fff"/><circle cx="818.71" cy="1297.08" r="3.6" fill="#3462f6"/><circle cx="818.71" cy="1297.08" r="1.3" fill="#fff"/><circle cx="877.03" cy="1327.14" r="3.6" fill="#3462f6"/><circle cx="877.03" cy="1327.14" r="1.3" fill="#fff"/><circle cx="935.34" cy="1283.40" r="3.6" fill="#3462f6"/><circle cx="935.34" cy="1283.40" r="1.3" fill="#fff"/><circle cx="993.66" cy="1284.07" r="3.6" fill="#3462f6"/><circle cx="993.66" cy="1284.07" r="1.3" fill="#fff"/><circle cx="1051.97" cy="1292.82" r="3.6" fill="#3462f6"/><circle cx="1051.97" cy="1292.82" r="1.3" fill="#fff"/><circle cx="1110.29" cy="1303.59" r="3.6" fill="#3462f6"/><circle cx="1110.29" cy="1303.59" r="1.3" fill="#fff"/><circle cx="1168.60" cy="1312.11" r="3.6" fill="#3462f6"/><circle cx="1168.60" cy="1312.11" r="1.3" fill="#fff"/><circle cx="1226.91" cy="1262.31" r="3.6" fill="#3462f6"/><circle cx="1226.91" cy="1262.31" r="1.3" fill="#fff"/><circle cx="1285.23" cy="1296.41" r="3.6" fill="#3462f6"/><circle cx="1285.23" cy="1296.41" r="1.3" fill="#fff"/><circle cx="1343.54" cy="1289.90" r="3.6" fill="#3462f6"/><circle cx="1343.54" cy="1289.90" r="1.3" fill="#fff"/><circle cx="1401.86" cy="1301.79" r="3.6" fill="#3462f6"/><circle cx="1401.86" cy="1301.79" r="1.3" fill="#fff"/><circle cx="1460.17" cy="1318.62" r="3.6" fill="#3462f6"/><circle cx="1460.17" cy="1318.62" r="1.3" fill="#fff"/><circle cx="1518.49" cy="1300.89" r="3.6" fill="#3462f6"/><circle cx="1518.49" cy="1300.89" r="1.3" fill="#fff"/><circle cx="1576.80" cy="1309.20" r="3.6" fill="#3462f6"/><circle cx="1576.80" cy="1309.20" r="1.3" fill="#fff"/><circle cx="1635.11" cy="1311.89" r="3.6" fill="#3462f6"/><circle cx="1635.11" cy="1311.89" r="1.3" fill="#fff"/><circle cx="1693.43" cy="1309.20" r="3.6" fill="#3462f6"/><circle cx="1693.43" cy="1309.20" r="1.3" fill="#fff"/><circle cx="1751.74" cy="1309.20" r="3.6" fill="#3462f6"/><circle cx="1751.74" cy="1309.20" r="1.3" fill="#fff"/><circle cx="1810.06" cy="1257.60" r="3.6" fill="#3462f6"/><circle cx="1810.06" cy="1257.60" r="1.3" fill="#fff"/><circle cx="1868.37" cy="1284.29" r="3.6" fill="#3462f6"/><circle cx="1868.37" cy="1284.29" r="1.3" fill="#fff"/><circle cx="1926.69" cy="1265.00" r="3.6" fill="#3462f6"/><circle cx="1926.69" cy="1265.00" r="1.3" fill="#fff"/><circle cx="1985.00" cy="1311.21" r="3.6" fill="#3462f6"/><circle cx="1985.00" cy="1311.21" r="1.3" fill="#fff"/><polyline points="352.20,1364.61 410.51,1346.43 468.83,1331.85 527.14,1354.29 585.46,1337.24 643.77,1361.24 702.09,1307.85 760.40,1317.50 818.71,1356.31 877.03,1366.40 935.34,1361.91 993.66,1355.18 1051.97,1359.89 1110.29,1336.56 1168.60,1361.02 1226.91,1348.45 1285.23,1344.19 1343.54,1360.34 1401.86,1364.61 1460.17,1366.40 1518.49,1363.93 1576.80,1366.40 1635.11,1361.24 1693.43,1331.40 1751.74,1366.40 1810.06,1366.40 1868.37,1312.34 1926.69,1309.87 1985.00,1366.40" fill="none" stroke="#2dd4a3" stroke-width="2.75" stroke-linejoin="round"/><circle cx="352.20" cy="1364.61" r="3.6" fill="#2dd4a3"/><circle cx="352.20" cy="1364.61" r="1.3" fill="#fff"/><circle cx="410.51" cy="1346.43" r="3.6" fill="#2dd4a3"/><circle cx="410.51" cy="1346.43" r="1.3" fill="#fff"/><circle cx="468.83" cy="1331.85" r="3.6" fill="#2dd4a3"/><circle cx="468.83" cy="1331.85" r="1.3" fill="#fff"/><circle cx="527.14" cy="1354.29" r="3.6" fill="#2dd4a3"/><circle cx="527.14" cy="1354.29" r="1.3" fill="#fff"/><circle cx="585.46" cy="1337.24" r="3.6" fill="#2dd4a3"/><circle cx="585.46" cy="1337.24" r="1.3" fill="#fff"/><circle cx="643.77" cy="1361.24" r="3.6" fill="#2dd4a3"/><circle cx="643.77" cy="1361.24" r="1.3" fill="#fff"/><circle cx="702.09" cy="1307.85" r="3.6" fill="#2dd4a3"/><circle cx="702.09" cy="1307.85" r="1.3" fill="#fff"/><circle cx="760.40" cy="1317.50" r="3.6" fill="#2dd4a3"/><circle cx="760.40" cy="1317.50" r="1.3" fill="#fff"/><circle cx="818.71" cy="1356.31" r="3.6" fill="#2dd4a3"/><circle cx="818.71" cy="1356.31" r="1.3" fill="#fff"/><circle cx="877.03" cy="1366.40" r="3.6" fill="#2dd4a3"/><circle cx="877.03" cy="1366.40" r="1.3" fill="#fff"/><circle cx="935.34" cy="1361.91" r="3.6" fill="#2dd4a3"/><circle cx="935.34" cy="1361.91" r="1.3" fill="#fff"/><circle cx="993.66" cy="1355.18" r="3.6" fill="#2dd4a3"/><circle cx="993.66" cy="1355.18" r="1.3" fill="#fff"/><circle cx="1051.97" cy="1359.89" r="3.6" fill="#2dd4a3"/><circle cx="1051.97" cy="1359.89" r="1.3" fill="#fff"/><circle cx="1110.29" cy="1336.56" r="3.6" fill="#2dd4a3"/><circle cx="1110.29" cy="1336.56" r="1.3" fill="#fff"/><circle cx="1168.60" cy="1361.02" r="3.6" fill="#2dd4a3"/><circle cx="1168.60" cy="1361.02" r="1.3" fill="#fff"/><circle cx="1226.91" cy="1348.45" r="3.6" fill="#2dd4a3"/><circle cx="1226.91" cy="1348.45" r="1.3" fill="#fff"/><circle cx="1285.23" cy="1344.19" r="3.6" fill="#2dd4a3"/><circle cx="1285.23" cy="1344.19" r="1.3" fill="#fff"/><circle cx="1343.54" cy="1360.34" r="3.6" fill="#2dd4a3"/><circle cx="1343.54" cy="1360.34" r="1.3" fill="#fff"/><circle cx="1401.86" cy="1364.61" r="3.6" fill="#2dd4a3"/><circle cx="1401.86" cy="1364.61" r="1.3" fill="#fff"/><circle cx="1460.17" cy="1366.40" r="3.6" fill="#2dd4a3"/><circle cx="1460.17" cy="1366.40" r="1.3" fill="#fff"/><circle cx="1518.49" cy="1363.93" r="3.6" fill="#2dd4a3"/><circle cx="1518.49" cy="1363.93" r="1.3" fill="#fff"/><circle cx="1576.80" cy="1366.40" r="3.6" fill="#2dd4a3"/><circle cx="1576.80" cy="1366.40" r="1.3" fill="#fff"/><circle cx="1635.11" cy="1361.24" r="3.6" fill="#2dd4a3"/><circle cx="1635.11" cy="1361.24" r="1.3" fill="#fff"/><circle cx="1693.43" cy="1331.40" r="3.6" fill="#2dd4a3"/><circle cx="1693.43" cy="1331.40" r="1.3" fill="#fff"/><circle cx="1751.74" cy="1366.40" r="3.6" fill="#2dd4a3"/><circle cx="1751.74" cy="1366.40" r="1.3" fill="#fff"/><circle cx="1810.06" cy="1366.40" r="3.6" fill="#2dd4a3"/><circle cx="1810.06" cy="1366.40" r="1.3" fill="#fff"/><circle cx="1868.37" cy="1312.34" r="3.6" fill="#2dd4a3"/><circle cx="1868.37" cy="1312.34" r="1.3" fill="#fff"/><circle cx="1926.69" cy="1309.87" r="3.6" fill="#2dd4a3"/><circle cx="1926.69" cy="1309.87" r="1.3" fill="#fff"/><circle cx="1985.00" cy="1366.40" r="3.6" fill="#2dd4a3"/><circle cx="1985.00" cy="1366.40" r="1.3" fill="#fff"/><polyline points="352.20,1363.71 410.51,1366.40 468.83,1366.40 527.14,1366.40 585.46,1366.40 643.77,1366.40 702.09,1366.40 760.40,1364.16 818.71,1366.40 877.03,1366.40 935.34,1356.31 993.66,1363.48 1051.97,1365.50 1110.29,1359.89 1168.60,1366.40 1226.91,1366.40 1285.23,1366.40 1343.54,1366.40 1401.86,1363.71 1460.17,1366.40 1518.49,1366.40 1576.80,1366.40 1635.11,1366.40 1693.43,1363.26 1751.74,1366.40 1810.06,1366.40 1868.37,1362.36 1926.69,1366.40 1985.00,1366.40" fill="none" stroke="#f0605e" stroke-width="2.75" stroke-linejoin="round"/><circle cx="352.20" cy="1363.71" r="3.6" fill="#f0605e"/><circle cx="352.20" cy="1363.71" r="1.3" fill="#fff"/><circle cx="410.51" cy="1366.40" r="3.6" fill="#f0605e"/><circle cx="410.51" cy="1366.40" r="1.3" fill="#fff"/><circle cx="468.83" cy="1366.40" r="3.6" fill="#f0605e"/><circle cx="468.83" cy="1366.40" r="1.3" fill="#fff"/><circle cx="527.14" cy="1366.40" r="3.6" fill="#f0605e"/><circle cx="527.14" cy="1366.40" r="1.3" fill="#fff"/><circle cx="585.46" cy="1366.40" r="3.6" fill="#f0605e"/><circle cx="585.46" cy="1366.40" r="1.3" fill="#fff"/><circle cx="643.77" cy="1366.40" r="3.6" fill="#f0605e"/><circle cx="643.77" cy="1366.40" r="1.3" fill="#fff"/><circle cx="702.09" cy="1366.40" r="3.6" fill="#f0605e"/><circle cx="702.09" cy="1366.40" r="1.3" fill="#fff"/><circle cx="760.40" cy="1364.16" r="3.6" fill="#f0605e"/><circle cx="760.40" cy="1364.16" r="1.3" fill="#fff"/><circle cx="818.71" cy="1366.40" r="3.6" fill="#f0605e"/><circle cx="818.71" cy="1366.40" r="1.3" fill="#fff"/><circle cx="877.03" cy="1366.40" r="3.6" fill="#f0605e"/><circle cx="877.03" cy="1366.40" r="1.3" fill="#fff"/><circle cx="935.34" cy="1356.31" r="3.6" fill="#f0605e"/><circle cx="935.34" cy="1356.31" r="1.3" fill="#fff"/><circle cx="993.66" cy="1363.48" r="3.6" fill="#f0605e"/><circle cx="993.66" cy="1363.48" r="1.3" fill="#fff"/><circle cx="1051.97" cy="1365.50" r="3.6" fill="#f0605e"/><circle cx="1051.97" cy="1365.50" r="1.3" fill="#fff"/><circle cx="1110.29" cy="1359.89" r="3.6" fill="#f0605e"/><circle cx="1110.29" cy="1359.89" r="1.3" fill="#fff"/><circle cx="1168.60" cy="1366.40" r="3.6" fill="#f0605e"/><circle cx="1168.60" cy="1366.40" r="1.3" fill="#fff"/><circle cx="1226.91" cy="1366.40" r="3.6" fill="#f0605e"/><circle cx="1226.91" cy="1366.40" r="1.3" fill="#fff"/><circle cx="1285.23" cy="1366.40" r="3.6" fill="#f0605e"/><circle cx="1285.23" cy="1366.40" r="1.3" fill="#fff"/><circle cx="1343.54" cy="1366.40" r="3.6" fill="#f0605e"/><circle cx="1343.54" cy="1366.40" r="1.3" fill="#fff"/><circle cx="1401.86" cy="1363.71" r="3.6" fill="#f0605e"/><circle cx="1401.86" cy="1363.71" r="1.3" fill="#fff"/><circle cx="1460.17" cy="1366.40" r="3.6" fill="#f0605e"/><circle cx="1460.17" cy="1366.40" r="1.3" fill="#fff"/><circle cx="1518.49" cy="1366.40" r="3.6" fill="#f0605e"/><circle cx="1518.49" cy="1366.40" r="1.3" fill="#fff"/><circle cx="1576.80" cy="1366.40" r="3.6" fill="#f0605e"/><circle cx="1576.80" cy="1366.40" r="1.3" fill="#fff"/><circle cx="1635.11" cy="1366.40" r="3.6" fill="#f0605e"/><circle cx="1635.11" cy="1366.40" r="1.3" fill="#fff"/><circle cx="1693.43" cy="1363.26" r="3.6" fill="#f0605e"/><circle cx="1693.43" cy="1363.26" r="1.3" fill="#fff"/><circle cx="1751.74" cy="1366.40" r="3.6" fill="#f0605e"/><circle cx="1751.74" cy="1366.40" r="1.3" fill="#fff"/><circle cx="1810.06" cy="1366.40" r="3.6" fill="#f0605e"/><circle cx="1810.06" cy="1366.40" r="1.3" fill="#fff"/><circle cx="1868.37" cy="1362.36" r="3.6" fill="#f0605e"/><circle cx="1868.37" cy="1362.36" r="1.3" fill="#fff"/><circle cx="1926.69" cy="1366.40" r="3.6" fill="#f0605e"/><circle cx="1926.69" cy="1366.40" r="1.3" fill="#fff"/><circle cx="1985.00" cy="1366.40" r="3.6" fill="#f0605e"/><circle cx="1985.00" cy="1366.40" r="1.3" fill="#fff"/><polyline points="352.20,1260.74 410.51,1277.12 468.83,1353.61 527.14,1311.66 585.46,1277.12 643.77,1310.54 702.09,1296.18 760.40,1332.30 818.71,1278.69 877.03,1343.97 935.34,1337.46 993.66,1309.42 1051.97,1229.56 1110.29,1303.14 1168.60,1261.19 1226.91,1257.37 1285.23,1203.76 1343.54,1242.34 1401.86,1246.38 1460.17,1320.86 1518.49,1280.03 1576.80,1308.30 1635.11,1245.04 1693.43,1153.73 1751.74,1338.36 1810.06,1242.12 1868.37,1256.48 1926.69,1187.38 1985.00,1118.06" fill="none" stroke="#f7a04f" stroke-width="2.75" stroke-linejoin="round"/><circle cx="352.20" cy="1260.74" r="3.6" fill="#f7a04f"/><circle cx="352.20" cy="1260.74" r="1.3" fill="#fff"/><circle cx="410.51" cy="1277.12" r="3.6" fill="#f7a04f"/><circle cx="410.51" cy="1277.12" r="1.3" fill="#fff"/><circle cx="468.83" cy="1353.61" r="3.6" fill="#f7a04f"/><circle cx="468.83" cy="1353.61" r="1.3" fill="#fff"/><circle cx="527.14" cy="1311.66" r="3.6" fill="#f7a04f"/><circle cx="527.14" cy="1311.66" r="1.3" fill="#fff"/><circle cx="585.46" cy="1277.12" r="3.6" fill="#f7a04f"/><circle cx="585.46" cy="1277.12" r="1.3" fill="#fff"/><circle cx="643.77" cy="1310.54" r="3.6" fill="#f7a04f"/><circle cx="643.77" cy="1310.54" r="1.3" fill="#fff"/><circle cx="702.09" cy="1296.18" r="3.6" fill="#f7a04f"/><circle cx="702.09" cy="1296.18" r="1.3" fill="#fff"/><circle cx="760.40" cy="1332.30" r="3.6" fill="#f7a04f"/><circle cx="760.40" cy="1332.30" r="1.3" fill="#fff"/><circle cx="818.71" cy="1278.69" r="3.6" fill="#f7a04f"/><circle cx="818.71" cy="1278.69" r="1.3" fill="#fff"/><circle cx="877.03" cy="1343.97" r="3.6" fill="#f7a04f"/><circle cx="877.03" cy="1343.97" r="1.3" fill="#fff"/><circle cx="935.34" cy="1337.46" r="3.6" fill="#f7a04f"/><circle cx="935.34" cy="1337.46" r="1.3" fill="#fff"/><circle cx="993.66" cy="1309.42" r="3.6" fill="#f7a04f"/><circle cx="993.66" cy="1309.42" r="1.3" fill="#fff"/><circle cx="1051.97" cy="1229.56" r="3.6" fill="#f7a04f"/><circle cx="1051.97" cy="1229.56" r="1.3" fill="#fff"/><circle cx="1110.29" cy="1303.14" r="3.6" fill="#f7a04f"/><circle cx="1110.29" cy="1303.14" r="1.3" fill="#fff"/><circle cx="1168.60" cy="1261.19" r="3.6" fill="#f7a04f"/><circle cx="1168.60" cy="1261.19" r="1.3" fill="#fff"/><circle cx="1226.91" cy="1257.37" r="3.6" fill="#f7a04f"/><circle cx="1226.91" cy="1257.37" r="1.3" fill="#fff"/><circle cx="1285.23" cy="1203.76" r="3.6" fill="#f7a04f"/><circle cx="1285.23" cy="1203.76" r="1.3" fill="#fff"/><circle cx="1343.54" cy="1242.34" r="3.6" fill="#f7a04f"/><circle cx="1343.54" cy="1242.34" r="1.3" fill="#fff"/><circle cx="1401.86" cy="1246.38" r="3.6" fill="#f7a04f"/><circle cx="1401.86" cy="1246.38" r="1.3" fill="#fff"/><circle cx="1460.17" cy="1320.86" r="3.6" fill="#f7a04f"/><circle cx="1460.17" cy="1320.86" r="1.3" fill="#fff"/><circle cx="1518.49" cy="1280.03" r="3.6" fill="#f7a04f"/><circle cx="1518.49" cy="1280.03" r="1.3" fill="#fff"/><circle cx="1576.80" cy="1308.30" r="3.6" fill="#f7a04f"/><circle cx="1576.80" cy="1308.30" r="1.3" fill="#fff"/><circle cx="1635.11" cy="1245.04" r="3.6" fill="#f7a04f"/><circle cx="1635.11" cy="1245.04" r="1.3" fill="#fff"/><circle cx="1693.43" cy="1153.73" r="3.6" fill="#f7a04f"/><circle cx="1693.43" cy="1153.73" r="1.3" fill="#fff"/><circle cx="1751.74" cy="1338.36" r="3.6" fill="#f7a04f"/><circle cx="1751.74" cy="1338.36" r="1.3" fill="#fff"/><circle cx="1810.06" cy="1242.12" r="3.6" fill="#f7a04f"/><circle cx="1810.06" cy="1242.12" r="1.3" fill="#fff"/><circle cx="1868.37" cy="1256.48" r="3.6" fill="#f7a04f"/><circle cx="1868.37" cy="1256.48" r="1.3" fill="#fff"/><circle cx="1926.69" cy="1187.38" r="3.6" fill="#f7a04f"/><circle cx="1926.69" cy="1187.38" r="1.3" fill="#fff"/><circle cx="1985.00" cy="1118.06" r="3.6" fill="#f7a04f"/><circle cx="1985.00" cy="1118.06" r="1.3" fill="#fff"/><polyline points="352.20,1366.40 410.51,1366.40 468.83,1366.40 527.14,1366.40 585.46,1366.40 643.77,1366.40 702.09,1366.40 760.40,1366.40 818.71,1366.40 877.03,1366.40 935.34,1366.40 993.66,1366.40 1051.97,1366.40 1110.29,1366.40 1168.60,1366.40 1226.91,1366.40 1285.23,1366.40 1343.54,1366.40 1401.86,1366.40 1460.17,1366.40 1518.49,1366.40 1576.80,1366.40 1635.11,1366.40 1693.43,1366.40 1751.74,1366.40 1810.06,1366.40 1868.37,1366.40 1926.69,1366.40 1985.00,1366.40" fill="none" stroke="#2ab4f4" stroke-width="2.75" stroke-linejoin="round"/><circle cx="352.20" cy="1366.40" r="3.6" fill="#2ab4f4"/><circle cx="352.20" cy="1366.40" r="1.3" fill="#fff"/><circle cx="410.51" cy="1366.40" r="3.6" fill="#2ab4f4"/><circle cx="410.51" cy="1366.40" r="1.3" fill="#fff"/><circle cx="468.83" cy="1366.40" r="3.6" fill="#2ab4f4"/><circle cx="468.83" cy="1366.40" r="1.3" fill="#fff"/><circle cx="527.14" cy="1366.40" r="3.6" fill="#2ab4f4"/><circle cx="527.14" cy="1366.40" r="1.3" fill="#fff"/><circle cx="585.46" cy="1366.40" r="3.6" fill="#2ab4f4"/><circle cx="585.46" cy="1366.40" r="1.3" fill="#fff"/><circle cx="643.77" cy="1366.40" r="3.6" fill="#2ab4f4"/><circle cx="643.77" cy="1366.40" r="1.3" fill="#fff"/><circle cx="702.09" cy="1366.40" r="3.6" fill="#2ab4f4"/><circle cx="702.09" cy="1366.40" r="1.3" fill="#fff"/><circle cx="760.40" cy="1366.40" r="3.6" fill="#2ab4f4"/><circle cx="760.40" cy="1366.40" r="1.3" fill="#fff"/><circle cx="818.71" cy="1366.40" r="3.6" fill="#2ab4f4"/><circle cx="818.71" cy="1366.40" r="1.3" fill="#fff"/><circle cx="877.03" cy="1366.40" r="3.6" fill="#2ab4f4"/><circle cx="877.03" cy="1366.40" r="1.3" fill="#fff"/><circle cx="935.34" cy="1366.40" r="3.6" fill="#2ab4f4"/><circle cx="935.34" cy="1366.40" r="1.3" fill="#fff"/><circle cx="993.66" cy="1366.40" r="3.6" fill="#2ab4f4"/><circle cx="993.66" cy="1366.40" r="1.3" fill="#fff"/><circle cx="1051.97" cy="1366.40" r="3.6" fill="#2ab4f4"/><circle cx="1051.97" cy="1366.40" r="1.3" fill="#fff"/><circle cx="1110.29" cy="1366.40" r="3.6" fill="#2ab4f4"/><circle cx="1110.29" cy="1366.40" r="1.3" fill="#fff"/><circle cx="1168.60" cy="1366.40" r="3.6" fill="#2ab4f4"/><circle cx="1168.60" cy="1366.40" r="1.3" fill="#fff"/><circle cx="1226.91" cy="1366.40" r="3.6" fill="#2ab4f4"/><circle cx="1226.91" cy="1366.40" r="1.3" fill="#fff"/><circle cx="1285.23" cy="1366.40" r="3.6" fill="#2ab4f4"/><circle cx="1285.23" cy="1366.40" r="1.3" fill="#fff"/><circle cx="1343.54" cy="1366.40" r="3.6" fill="#2ab4f4"/><circle cx="1343.54" cy="1366.40" r="1.3" fill="#fff"/><circle cx="1401.86" cy="1366.40" r="3.6" fill="#2ab4f4"/><circle cx="1401.86" cy="1366.40" r="1.3" fill="#fff"/><circle cx="1460.17" cy="1366.40" r="3.6" fill="#2ab4f4"/><circle cx="1460.17" cy="1366.40" r="1.3" fill="#fff"/><circle cx="1518.49" cy="1366.40" r="3.6" fill="#2ab4f4"/><circle cx="1518.49" cy="1366.40" r="1.3" fill="#fff"/><circle cx="1576.80" cy="1366.40" r="3.6" fill="#2ab4f4"/><circle cx="1576.80" cy="1366.40" r="1.3" fill="#fff"/><circle cx="1635.11" cy="1366.40" r="3.6" fill="#2ab4f4"/><circle cx="1635.11" cy="1366.40" r="1.3" fill="#fff"/><circle cx="1693.43" cy="1366.40" r="3.6" fill="#2ab4f4"/><circle cx="1693.43" cy="1366.40" r="1.3" fill="#fff"/><circle cx="1751.74" cy="1366.40" r="3.6" fill="#2ab4f4"/><circle cx="1751.74" cy="1366.40" r="1.3" fill="#fff"/><circle cx="1810.06" cy="1366.40" r="3.6" fill="#2ab4f4"/><circle cx="1810.06" cy="1366.40" r="1.3" fill="#fff"/><circle cx="1868.37" cy="1366.40" r="3.6" fill="#2ab4f4"/><circle cx="1868.37" cy="1366.40" r="1.3" fill="#fff"/><circle cx="1926.69" cy="1366.40" r="3.6" fill="#2ab4f4"/><circle cx="1926.69" cy="1366.40" r="1.3" fill="#fff"/><circle cx="1985.00" cy="1366.40" r="3.6" fill="#2ab4f4"/><circle cx="1985.00" cy="1366.40" r="1.3" fill="#fff"/><polyline points="352.20,1366.40 410.51,1366.40 468.83,1366.40 527.14,1366.40 585.46,1366.40 643.77,1366.40 702.09,1366.40 760.40,1366.40 818.71,1366.40 877.03,1366.40 935.34,1366.40 993.66,1366.40 1051.97,1366.40 1110.29,1366.40 1168.60,1366.40 1226.91,1366.40 1285.23,1366.40 1343.54,1366.40 1401.86,1366.40 1460.17,1366.40 1518.49,1366.40 1576.80,1366.40 1635.11,1366.40 1693.43,1366.40 1751.74,1366.40 1810.06,1366.40 1868.37,1366.40 1926.69,1366.40 1985.00,1366.40" fill="none" stroke="#c73ef0" stroke-width="2.75" stroke-linejoin="round"/><circle cx="352.20" cy="1366.40" r="3.6" fill="#c73ef0"/><circle cx="352.20" cy="1366.40" r="1.3" fill="#fff"/><circle cx="410.51" cy="1366.40" r="3.6" fill="#c73ef0"/><circle cx="410.51" cy="1366.40" r="1.3" fill="#fff"/><circle cx="468.83" cy="1366.40" r="3.6" fill="#c73ef0"/><circle cx="468.83" cy="1366.40" r="1.3" fill="#fff"/><circle cx="527.14" cy="1366.40" r="3.6" fill="#c73ef0"/><circle cx="527.14" cy="1366.40" r="1.3" fill="#fff"/><circle cx="585.46" cy="1366.40" r="3.6" fill="#c73ef0"/><circle cx="585.46" cy="1366.40" r="1.3" fill="#fff"/><circle cx="643.77" cy="1366.40" r="3.6" fill="#c73ef0"/><circle cx="643.77" cy="1366.40" r="1.3" fill="#fff"/><circle cx="702.09" cy="1366.40" r="3.6" fill="#c73ef0"/><circle cx="702.09" cy="1366.40" r="1.3" fill="#fff"/><circle cx="760.40" cy="1366.40" r="3.6" fill="#c73ef0"/><circle cx="760.40" cy="1366.40" r="1.3" fill="#fff"/><circle cx="818.71" cy="1366.40" r="3.6" fill="#c73ef0"/><circle cx="818.71" cy="1366.40" r="1.3" fill="#fff"/><circle cx="877.03" cy="1366.40" r="3.6" fill="#c73ef0"/><circle cx="877.03" cy="1366.40" r="1.3" fill="#fff"/><circle cx="935.34" cy="1366.40" r="3.6" fill="#c73ef0"/><circle cx="935.34" cy="1366.40" r="1.3" fill="#fff"/><circle cx="993.66" cy="1366.40" r="3.6" fill="#c73ef0"/><circle cx="993.66" cy="1366.40" r="1.3" fill="#fff"/><circle cx="1051.97" cy="1366.40" r="3.6" fill="#c73ef0"/><circle cx="1051.97" cy="1366.40" r="1.3" fill="#fff"/><circle cx="1110.29" cy="1366.40" r="3.6" fill="#c73ef0"/><circle cx="1110.29" cy="1366.40" r="1.3" fill="#fff"/><circle cx="1168.60" cy="1366.40" r="3.6" fill="#c73ef0"/><circle cx="1168.60" cy="1366.40" r="1.3" fill="#fff"/><circle cx="1226.91" cy="1366.40" r="3.6" fill="#c73ef0"/><circle cx="1226.91" cy="1366.40" r="1.3" fill="#fff"/><circle cx="1285.23" cy="1366.40" r="3.6" fill="#c73ef0"/><circle cx="1285.23" cy="1366.40" r="1.3" fill="#fff"/><circle cx="1343.54" cy="1366.40" r="3.6" fill="#c73ef0"/><circle cx="1343.54" cy="1366.40" r="1.3" fill="#fff"/><circle cx="1401.86" cy="1366.40" r="3.6" fill="#c73ef0"/><circle cx="1401.86" cy="1366.40" r="1.3" fill="#fff"/><circle cx="1460.17" cy="1366.40" r="3.6" fill="#c73ef0"/><circle cx="1460.17" cy="1366.40" r="1.3" fill="#fff"/><circle cx="1518.49" cy="1366.40" r="3.6" fill="#c73ef0"/><circle cx="1518.49" cy="1366.40" r="1.3" fill="#fff"/><circle cx="1576.80" cy="1366.40" r="3.6" fill="#c73ef0"/><circle cx="1576.80" cy="1366.40" r="1.3" fill="#fff"/><circle cx="1635.11" cy="1366.40" r="3.6" fill="#c73ef0"/><circle cx="1635.11" cy="1366.40" r="1.3" fill="#fff"/><circle cx="1693.43" cy="1366.40" r="3.6" fill="#c73ef0"/><circle cx="1693.43" cy="1366.40" r="1.3" fill="#fff"/><circle cx="1751.74" cy="1366.40" r="3.6" fill="#c73ef0"/><circle cx="1751.74" cy="1366.40" r="1.3" fill="#fff"/><circle cx="1810.06" cy="1366.40" r="3.6" fill="#c73ef0"/><circle cx="1810.06" cy="1366.40" r="1.3" fill="#fff"/><circle cx="1868.37" cy="1366.40" r="3.6" fill="#c73ef0"/><circle cx="1868.37" cy="1366.40" r="1.3" fill="#fff"/><circle cx="1926.69" cy="1366.40" r="3.6" fill="#c73ef0"/><circle cx="1926.69" cy="1366.40" r="1.3" fill="#fff"/><circle cx="1985.00" cy="1366.40" r="3.6" fill="#c73ef0"/><circle cx="1985.00" cy="1366.40" r="1.3" fill="#fff"/></svg>
<div class="t" style="right:2247.0px;top:1358.43px;font-size:15.5px;color:#a8a8ac;font-weight:400;-webkit-text-stroke:0.2px #a8a8ac">0</div>
<div class="t" style="right:2247.0px;top:1313.56px;font-size:15.5px;color:#a8a8ac;font-weight:400;-webkit-text-stroke:0.2px #a8a8ac">200</div>
<div class="t" style="right:2247.0px;top:1268.69px;font-size:15.5px;color:#a8a8ac;font-weight:400;-webkit-text-stroke:0.2px #a8a8ac">400</div>
<div class="t" style="right:2247.0px;top:1223.83px;font-size:15.5px;color:#a8a8ac;font-weight:400;-webkit-text-stroke:0.2px #a8a8ac">600</div>
<div class="t" style="right:2247.0px;top:1178.96px;font-size:15.5px;color:#a8a8ac;font-weight:400;-webkit-text-stroke:0.2px #a8a8ac">800</div>
<div class="t" style="right:2247.0px;top:1134.09px;font-size:15.5px;color:#a8a8ac;font-weight:400;-webkit-text-stroke:0.2px #a8a8ac"><span style="display:inline-block;transform:scaleX(0.8);margin:0 -1px">1</span>,000</div>
<div class="t" style="right:2247.0px;top:1089.23px;font-size:15.5px;color:#a8a8ac;font-weight:400;-webkit-text-stroke:0.2px #a8a8ac"><span style="display:inline-block;transform:scaleX(0.8);margin:0 -1px">1</span>,200</div>
<div class="t" style="left:202.2px;width:300px;text-align:center;top:1375.33px;font-size:15.5px;color:#acacb0;font-weight:400;-webkit-text-stroke:0.2px #acacb0;transform:scaleX(0.92);">Feb 1</div>
<div class="t" style="left:318.8px;width:300px;text-align:center;top:1375.33px;font-size:15.5px;color:#acacb0;font-weight:400;-webkit-text-stroke:0.2px #acacb0;transform:scaleX(0.92);">Feb 3</div>
<div class="t" style="left:435.5px;width:300px;text-align:center;top:1375.33px;font-size:15.5px;color:#acacb0;font-weight:400;-webkit-text-stroke:0.2px #acacb0;transform:scaleX(0.92);">Feb 5</div>
<div class="t" style="left:552.1px;width:300px;text-align:center;top:1375.33px;font-size:15.5px;color:#acacb0;font-weight:400;-webkit-text-stroke:0.2px #acacb0;transform:scaleX(0.92);">Feb 7</div>
<div class="t" style="left:668.7px;width:300px;text-align:center;top:1375.33px;font-size:15.5px;color:#acacb0;font-weight:400;-webkit-text-stroke:0.2px #acacb0;transform:scaleX(0.92);">Feb 9</div>
<div class="t" style="left:785.3px;width:300px;text-align:center;top:1375.33px;font-size:15.5px;color:#acacb0;font-weight:400;-webkit-text-stroke:0.2px #acacb0;transform:scaleX(0.92);">Feb 11</div>
<div class="t" style="left:902.0px;width:300px;text-align:center;top:1375.33px;font-size:15.5px;color:#acacb0;font-weight:400;-webkit-text-stroke:0.2px #acacb0;transform:scaleX(0.92);">Feb 13</div>
<div class="t" style="left:1018.6px;width:300px;text-align:center;top:1375.33px;font-size:15.5px;color:#acacb0;font-weight:400;-webkit-text-stroke:0.2px #acacb0;transform:scaleX(0.92);">Feb 15</div>
<div class="t" style="left:1135.2px;width:300px;text-align:center;top:1375.33px;font-size:15.5px;color:#acacb0;font-weight:400;-webkit-text-stroke:0.2px #acacb0;transform:scaleX(0.92);">Feb 17</div>
<div class="t" style="left:1251.9px;width:300px;text-align:center;top:1375.33px;font-size:15.5px;color:#acacb0;font-weight:400;-webkit-text-stroke:0.2px #acacb0;transform:scaleX(0.92);">Feb 19</div>
<div class="t" style="left:1368.5px;width:300px;text-align:center;top:1375.33px;font-size:15.5px;color:#acacb0;font-weight:400;-webkit-text-stroke:0.2px #acacb0;transform:scaleX(0.92);">Feb 21</div>
<div class="t" style="left:1485.1px;width:300px;text-align:center;top:1375.33px;font-size:15.5px;color:#acacb0;font-weight:400;-webkit-text-stroke:0.2px #acacb0;transform:scaleX(0.92);">Feb 23</div>
<div class="t" style="left:1601.7px;width:300px;text-align:center;top:1375.33px;font-size:15.5px;color:#acacb0;font-weight:400;-webkit-text-stroke:0.2px #acacb0;transform:scaleX(0.92);">Feb 25</div>
<div class="t" style="left:1718.4px;width:300px;text-align:center;top:1375.33px;font-size:15.5px;color:#acacb0;font-weight:400;-webkit-text-stroke:0.2px #acacb0;transform:scaleX(0.92);">Feb 27</div>
<div class="t" style="left:1835.0px;width:300px;text-align:center;top:1375.33px;font-size:15.5px;color:#acacb0;font-weight:400;-webkit-text-stroke:0.2px #acacb0;transform:scaleX(0.92);">Feb 29</div>
<div style="position:absolute;left:2155.9px;top:1056.9px;width:10.2px;height:10.2px;background:#3462f6;border-radius:50%"></div>
<div class="t" style="left:2176.5px;top:1054.23px;font-size:15.5px;color:#f4f4f4;font-weight:700;letter-spacing:-0.42px;">Subscriptions</div>
<div class="t" style="left:2351.0px;top:1055.17px;font-size:15.8px;color:#dadada;-webkit-text-stroke:0.2px #dadada;">36.77%</div>
<div class="t" style="left:2461.0px;top:1054.57px;font-size:16.5px;color:#dadada;-webkit-text-stroke:0.2px #dadada;">$8363.26</div>
<div style="position:absolute;left:2155.9px;top:1116.8px;width:10.2px;height:10.2px;background:#2dd4a3;border-radius:50%"></div>
<div class="t" style="left:2176.5px;top:1114.09px;font-size:15.5px;color:#f4f4f4;font-weight:700;letter-spacing:-0.42px;">Tips</div>
<div class="t" style="left:2355.6px;top:1115.03px;font-size:15.8px;color:#dadada;-webkit-text-stroke:0.2px #dadada;">9.<span style="display:inline-block;transform:scaleX(0.8);margin:0 -1.3px">1</span>7%</div>
<div class="t" style="left:2468.3px;top:1114.43px;font-size:16.5px;color:#dadada;-webkit-text-stroke:0.2px #dadada;">$2086.8</div>
<div style="position:absolute;left:2155.9px;top:1176.6px;width:10.2px;height:10.2px;background:#f0605e;border-radius:50%"></div>
<div class="t" style="left:2176.5px;top:1173.95px;font-size:15.5px;color:#f4f4f4;font-weight:700;letter-spacing:-0.42px;">Posts</div>
<div class="t" style="left:2355.6px;top:1174.89px;font-size:15.8px;color:#dadada;-webkit-text-stroke:0.2px #dadada;">0.58%</div>
<div class="t" style="left:2468.3px;top:1174.29px;font-size:16.5px;color:#dadada;-webkit-text-stroke:0.2px #dadada;">$<span style="display:inline-block;transform:scaleX(0.8);margin:0 -1.4px">1</span>3<span style="display:inline-block;transform:scaleX(0.8);margin:0 -1.4px">1</span>.07</div>
<div style="position:absolute;left:2155.9px;top:1236.5px;width:10.2px;height:10.2px;background:#f7a04f;border-radius:50%"></div>
<div class="t" style="left:2176.5px;top:1233.81px;font-size:15.5px;color:#f4f4f4;font-weight:700;letter-spacing:-0.42px;">Messages</div>
<div class="t" style="left:2347.8px;top:1234.75px;font-size:15.8px;color:#dadada;-webkit-text-stroke:0.2px #dadada;">53.48%</div>
<div class="t" style="left:2457.4px;top:1234.15px;font-size:16.5px;color:#dadada;-webkit-text-stroke:0.2px #dadada;">$<span style="display:inline-block;transform:scaleX(0.8);margin:0 -1.4px">1</span>2<span style="display:inline-block;transform:scaleX(0.8);margin:0 -1.4px">1</span>65.04</div>
<div style="position:absolute;left:2155.9px;top:1296.3px;width:10.2px;height:10.2px;background:#2ab4f4;border-radius:50%"></div>
<div class="t" style="left:2176.5px;top:1293.67px;font-size:15.5px;color:#f4f4f4;font-weight:700;letter-spacing:-0.42px;">Referrals</div>
<div class="t" style="left:2355.6px;top:1294.61px;font-size:15.8px;color:#dadada;-webkit-text-stroke:0.2px #dadada;">0%</div>
<div class="t" style="left:2468.3px;top:1294.01px;font-size:16.5px;color:#dadada;-webkit-text-stroke:0.2px #dadada;">$0</div>
<div style="position:absolute;left:2155.9px;top:1356.2px;width:10.2px;height:10.2px;background:#c73ef0;border-radius:50%"></div>
<div class="t" style="left:2176.5px;top:1353.53px;font-size:15.5px;color:#f4f4f4;font-weight:700;letter-spacing:-0.42px;">Streams</div>
<div class="t" style="left:2355.6px;top:1354.47px;font-size:15.8px;color:#dadada;-webkit-text-stroke:0.2px #dadada;">0%</div>
<div class="t" style="left:2468.3px;top:1353.87px;font-size:16.5px;color:#dadada;-webkit-text-stroke:0.2px #dadada;">$0</div>
<div class="t" style="left:275.5px;top:1445.95px;font-size:21px;color:#e6e6e6;letter-spacing:0.08px;-webkit-text-stroke:0.3px #e6e6e6;">Creator statistics</div>
<svg style="position:absolute;left:2282.0px;top:1445.0px;" width="22" height="22" viewBox="0 0 22 22"><g stroke="#a8a8a8" stroke-width="1.7" stroke-linecap="round"><line x1="3" y1="5.6" x2="18.6" y2="5.6"/><line x1="3" y1="15.2" x2="18.6" y2="15.2"/></g><circle cx="12.4" cy="5.6" r="2.3" fill="#a8a8a8"/><circle cx="8.6" cy="15.2" r="2.3" fill="#a8a8a8"/></svg>
<div class="t" style="left:2309.5px;top:1449.30px;font-size:16px;color:#d6d6d6;-webkit-text-stroke:0.25px #d6d6d6;">Custom metrics</div>
<div style="position:absolute;left:2435.4px;top:1441.2px;width:104.0px;height:29.6px;box-sizing:border-box;border:1.5px solid #3478f6;border-radius:5px"></div>
<svg style="position:absolute;left:2446.0px;top:1448.0px;" width="18" height="18" viewBox="0 0 18 18"><g fill="none" stroke="#3a80f6" stroke-width="1.5" stroke-linecap="round" stroke-linejoin="round"><path d="M9 11.4 V3.6 M6 6.4 L9 3.4 L12 6.4"/><path d="M3.8 10.4 V14.2 H14.2 V10.4"/></g></svg>
<div class="t" style="left:2473.0px;top:1449.30px;font-size:16px;color:#3a80f6;-webkit-text-stroke:0.25px #3a80f6;">Export</div>
<div style="position:absolute;left:275.8px;top:1492.8px;width:547.6px;height:60.0px;box-sizing:border-box;border:2px solid #393939;border-radius:13.5px"></div>
<div style="position:absolute;left:844.5px;top:1492.8px;width:547.6px;height:60.0px;box-sizing:border-box;border:2px solid #393939;border-radius:13.5px"></div>
<div style="position:absolute;left:1413.9px;top:1492.8px;width:547.6px;height:60.0px;box-sizing:border-box;border:2px solid #393939;border-radius:13.5px"></div>
<div style="position:absolute;left:1981.8px;top:1492.8px;width:547.6px;height:60.0px;box-sizing:border-box;border:2px solid #393939;border-radius:13.5px"></div>
<div style="position:absolute;left:246.0px;top:1505.8px;width:2314.0px;height:7.2px;background:#282828"></div>
<div style="position:absolute;left:0.0px;top:1513.0px;width:2560.0px;height:2.0px;background:#000"></div>
<div style="position:absolute;left:2486.1px;top:1428.6px;width:58.8px;height:58.8px;background:#000;border-radius:50%"></div>
<svg style="position:absolute;left:2500.0px;top:1441.0px;" width="32" height="34" viewBox="0 0 32 34"><path d="M1.8 4.8 Q1.8 2.3 4.3 2.3 H25.9 Q28.4 2.3 28.4 4.8 V31.8 L22.4 28.6 H4.3 Q1.8 28.6 1.8 26.1 Z" fill="#fff"/><path d="M6.4 20.2 Q15.2 26 24 20.2" fill="none" stroke="#000" stroke-width="1.8" stroke-linecap="round"/></svg>
</body></html>
